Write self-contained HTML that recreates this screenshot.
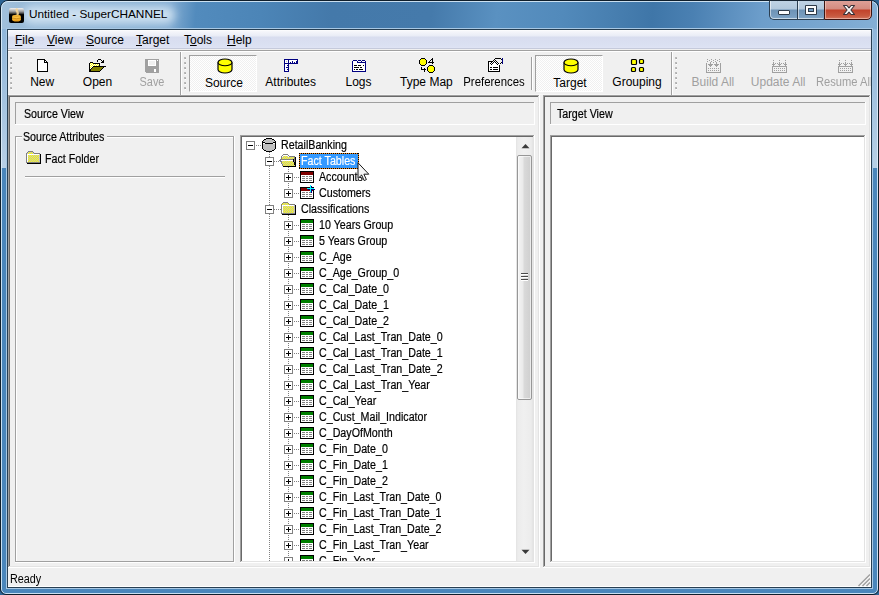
<!DOCTYPE html>
<html><head><meta charset="utf-8">
<style>
html,body{margin:0;padding:0;}
body{width:879px;height:595px;position:relative;overflow:hidden;background:#2d6494;font-family:"Liberation Sans",sans-serif;color:#000;}
.a{position:absolute;}
.t11{position:absolute;font-size:12px;line-height:14px;white-space:nowrap;transform:scaleX(0.89);transform-origin:0 0;-webkit-text-stroke:0.2px currentColor;}
.t12{position:absolute;font-size:12px;line-height:14px;white-space:nowrap;}
.dis{color:#a0a0a0;}
u{text-decoration:underline;text-underline-offset:1px;text-decoration-thickness:1px;}
</style></head>
<body>
<!-- ============ WINDOW FRAME ============ -->
<div class="a" style="left:0;top:0;width:877px;height:593px;border:1px solid #0f1e2b;border-radius:8px 8px 6px 6px;background:#4a86bb;overflow:hidden">
  <!-- title bar -->
  <div class="a" style="left:0;top:0;width:877px;height:28px;background:linear-gradient(95deg,#a2c1dc 0,#98bad8 25px,#82acd2 170px,#528bbd 195px,#4c85b7 260px,#4479aa 330px,#457aab 430px,#5a91c1 495px,#528abb 560px,#477eaf 615px,#3f76a8 650px,#4a80b2 690px,#6d9ecb 760px,#84afd5 877px)"></div>
  <div class="a" style="left:22px;top:5px;width:152px;height:18px;border-radius:9px;background:rgba(215,232,245,0.85);filter:blur(4.5px)"></div>
  <!-- side light sections -->
  <div class="a" style="left:0;top:28px;width:6px;height:139px;background:linear-gradient(180deg,#8fb6da,#b8d0e6)"></div>
  <div class="a" style="left:871px;top:28px;width:6px;height:139px;background:linear-gradient(180deg,#8fb6da,#b8d0e6)"></div>
  <!-- inner highlight -->
  <div class="a" style="left:0;top:0;width:875px;height:591px;border:1px solid rgba(225,240,250,0.85);border-radius:7px 7px 5px 5px"></div>
</div>
<!-- client outer light line + dark frame -->
<div class="a" style="left:6px;top:28px;width:865px;height:559px;border:1px solid #a8c8e4"></div>
<div class="a" style="left:7px;top:29px;width:863px;height:557px;border:1px solid #283f52;background:#f0f0f0"></div>

<!-- title icon -->
<div class="a" style="left:9px;top:8px;width:15px;height:15px;border-radius:2px;background:linear-gradient(180deg,#f2f2f2 0,#c4c4c4 2px,#949494 3.7px,#444 5.4px,#000 6.6px,#000 15px)"></div>
<svg class="a" style="left:9px;top:8px" width="15" height="15" viewBox="0 0 15 15">
  <path d="M7.8 1.5 C6.8 3 9.6 4 8.6 6.2" stroke="#f2d49a" stroke-width="2.3" fill="none" stroke-linecap="round" opacity="0.9"/>
  <ellipse cx="7.5" cy="11.6" rx="4.3" ry="2" fill="#e8a020"/>
  <rect x="3.2" y="8.8" width="8.6" height="3" fill="#f0b030"/>
  <ellipse cx="7.5" cy="8.8" rx="4.3" ry="2" fill="#f8c040"/>
  <path d="M3.5 10 Q7.5 11.5 11.5 10" stroke="#c07810" stroke-width="0.7" fill="none"/>
  <path d="M3.5 7.6 Q7.5 9 11.5 7.6" stroke="#d08818" stroke-width="0.6" fill="none"/>
</svg>
<div class="t12" style="left:29px;top:7px;font-size:11.8px;color:#000">Untitled - SuperCHANNEL</div>

<!-- caption buttons -->
<div class="a" style="left:769px;top:-4px;width:54px;height:22px;border:1px solid #2b3e50;border-right:none;border-radius:0 0 0 5px;overflow:hidden;background:linear-gradient(180deg,#c6d8e8 0,#b2c8dc 12px,#6e93b6 13px,#7a9fc1 20px,#8fb1d0 23px)">
  <div class="a" style="left:0;top:0;width:52px;height:20px;border:1px solid rgba(255,255,255,0.55);border-right:none;border-radius:0 0 0 4px"></div>
  <div class="a" style="left:27px;top:0;width:1px;height:22px;background:#2b3e50"></div>
  <div class="a" style="left:28px;top:0;width:1px;height:22px;background:rgba(255,255,255,0.55)"></div>
</div>
<div class="a" style="left:824px;top:-4px;width:46px;height:22px;border:1px solid #3c1410;border-radius:0 0 5px 0;overflow:hidden;background:linear-gradient(180deg,#e2aaa2 0,#d38b80 12px,#c1422b 13px,#c85a40 19px,#d4806a 23px)">
  <div class="a" style="left:0;top:0;width:44px;height:20px;border:1px solid rgba(255,225,215,0.5);border-radius:0 0 4px 0"></div>
</div>
<!-- min glyph -->
<div class="a" style="left:778px;top:10px;width:10px;height:3px;border:1px solid #2e3a48;border-radius:1px;background:#fcfcfc"></div>
<!-- max glyph -->
<div class="a" style="left:805px;top:5px;width:12px;height:10px;background:#2e3a48;border-radius:1px"></div>
<div class="a" style="left:806px;top:6px;width:10px;height:8px;background:#fcfcfc"></div>
<div class="a" style="left:808px;top:8px;width:6px;height:4px;background:#2e3a48"></div>
<div class="a" style="left:809px;top:9px;width:4px;height:2px;background:#6f9bc2"></div>
<!-- close glyph -->
<svg class="a" style="left:842px;top:4px" width="14" height="12" viewBox="0 0 14 12">
  <path d="M1.5 1.5 H4.9 L7 3.9 L9.1 1.5 H12.5 L8.9 6 L12.5 10.5 H9.1 L7 8.1 L4.9 10.5 H1.5 L5.1 6 Z" fill="#f8f8f8" stroke="#3a3238" stroke-width="1.1" stroke-linejoin="round"/>
</svg>

<!-- ============ MENU BAR ============ -->
<div class="a" style="left:8px;top:30px;width:863px;height:19px;background:linear-gradient(180deg,#ffffff 0px,#f6f7fb 1px,#e9ecf6 6px,#d8ddef 7px,#dbe1f2 16px,#dfe4f4 18px,#c5cadb 18px,#c5cadb 19px)"></div>
<div class="a" style="left:8px;top:49px;width:863px;height:1px;background:#f0f0f0"></div>
<div class="a" style="left:8px;top:50px;width:863px;height:1px;background:#a0a0a0"></div>
<div class="a" style="left:8px;top:51px;width:863px;height:1px;background:#ffffff"></div>
<div class="t12" style="left:15px;top:33px"><u>F</u>ile</div>
<div class="t12" style="left:47px;top:33px"><u>V</u>iew</div>
<div class="t12" style="left:86px;top:33px"><u>S</u>ource</div>
<div class="t12" style="left:136px;top:33px"><u>T</u>arget</div>
<div class="t12" style="left:184px;top:33px">T<u>o</u>ols</div>
<div class="t12" style="left:227px;top:33px"><u>H</u>elp</div>


<!-- caption top dark line -->
<div class="a" style="left:769px;top:0;width:103px;height:1px;background:#1a2836"></div>
<!-- ============ TOOLBAR ============ -->
<div class="a" style="left:8px;top:94px;width:863px;height:1px;background:#f6f6f6"></div>
<div class="a" style="left:10px;top:57px;width:2px;height:2px;background:#a8a8a8;border-radius:1px 1px 0 1px"></div><div class="a" style="left:11px;top:59px;width:1px;height:1px;background:#fff"></div><div class="a" style="left:10px;top:62px;width:2px;height:2px;background:#a8a8a8;border-radius:1px 1px 0 1px"></div><div class="a" style="left:11px;top:64px;width:1px;height:1px;background:#fff"></div><div class="a" style="left:10px;top:67px;width:2px;height:2px;background:#a8a8a8;border-radius:1px 1px 0 1px"></div><div class="a" style="left:11px;top:69px;width:1px;height:1px;background:#fff"></div><div class="a" style="left:10px;top:72px;width:2px;height:2px;background:#a8a8a8;border-radius:1px 1px 0 1px"></div><div class="a" style="left:11px;top:74px;width:1px;height:1px;background:#fff"></div><div class="a" style="left:10px;top:77px;width:2px;height:2px;background:#a8a8a8;border-radius:1px 1px 0 1px"></div><div class="a" style="left:11px;top:79px;width:1px;height:1px;background:#fff"></div><div class="a" style="left:10px;top:82px;width:2px;height:2px;background:#a8a8a8;border-radius:1px 1px 0 1px"></div><div class="a" style="left:11px;top:84px;width:1px;height:1px;background:#fff"></div><div class="a" style="left:10px;top:87px;width:2px;height:2px;background:#a8a8a8;border-radius:1px 1px 0 1px"></div><div class="a" style="left:11px;top:89px;width:1px;height:1px;background:#fff"></div>
<div class="a" style="left:184px;top:57px;width:2px;height:2px;background:#a8a8a8;border-radius:1px 1px 0 1px"></div><div class="a" style="left:185px;top:59px;width:1px;height:1px;background:#fff"></div><div class="a" style="left:184px;top:62px;width:2px;height:2px;background:#a8a8a8;border-radius:1px 1px 0 1px"></div><div class="a" style="left:185px;top:64px;width:1px;height:1px;background:#fff"></div><div class="a" style="left:184px;top:67px;width:2px;height:2px;background:#a8a8a8;border-radius:1px 1px 0 1px"></div><div class="a" style="left:185px;top:69px;width:1px;height:1px;background:#fff"></div><div class="a" style="left:184px;top:72px;width:2px;height:2px;background:#a8a8a8;border-radius:1px 1px 0 1px"></div><div class="a" style="left:185px;top:74px;width:1px;height:1px;background:#fff"></div><div class="a" style="left:184px;top:77px;width:2px;height:2px;background:#a8a8a8;border-radius:1px 1px 0 1px"></div><div class="a" style="left:185px;top:79px;width:1px;height:1px;background:#fff"></div><div class="a" style="left:184px;top:82px;width:2px;height:2px;background:#a8a8a8;border-radius:1px 1px 0 1px"></div><div class="a" style="left:185px;top:84px;width:1px;height:1px;background:#fff"></div><div class="a" style="left:184px;top:87px;width:2px;height:2px;background:#a8a8a8;border-radius:1px 1px 0 1px"></div><div class="a" style="left:185px;top:89px;width:1px;height:1px;background:#fff"></div>
<div class="a" style="left:675px;top:57px;width:2px;height:2px;background:#a8a8a8;border-radius:1px 1px 0 1px"></div><div class="a" style="left:676px;top:59px;width:1px;height:1px;background:#fff"></div><div class="a" style="left:675px;top:62px;width:2px;height:2px;background:#a8a8a8;border-radius:1px 1px 0 1px"></div><div class="a" style="left:676px;top:64px;width:1px;height:1px;background:#fff"></div><div class="a" style="left:675px;top:67px;width:2px;height:2px;background:#a8a8a8;border-radius:1px 1px 0 1px"></div><div class="a" style="left:676px;top:69px;width:1px;height:1px;background:#fff"></div><div class="a" style="left:675px;top:72px;width:2px;height:2px;background:#a8a8a8;border-radius:1px 1px 0 1px"></div><div class="a" style="left:676px;top:74px;width:1px;height:1px;background:#fff"></div><div class="a" style="left:675px;top:77px;width:2px;height:2px;background:#a8a8a8;border-radius:1px 1px 0 1px"></div><div class="a" style="left:676px;top:79px;width:1px;height:1px;background:#fff"></div><div class="a" style="left:675px;top:82px;width:2px;height:2px;background:#a8a8a8;border-radius:1px 1px 0 1px"></div><div class="a" style="left:676px;top:84px;width:1px;height:1px;background:#fff"></div><div class="a" style="left:675px;top:87px;width:2px;height:2px;background:#a8a8a8;border-radius:1px 1px 0 1px"></div><div class="a" style="left:676px;top:89px;width:1px;height:1px;background:#fff"></div>
<div class="a" style="left:180px;top:52px;width:1px;height:43px;background:#a0a0a0"></div><div class="a" style="left:181px;top:52px;width:1px;height:43px;background:#fff"></div>
<div class="a" style="left:671px;top:52px;width:1px;height:43px;background:#a0a0a0"></div><div class="a" style="left:672px;top:52px;width:1px;height:43px;background:#fff"></div>
<div class="a" style="left:531px;top:57px;width:1px;height:33px;background:#a0a0a0"></div><div class="a" style="left:532px;top:57px;width:1px;height:33px;background:#fff"></div>
<div class="a" style="left:189px;top:55px;width:66px;height:35px;border-style:solid;border-width:1px;border-color:#a0a0a0 #fff #fff #a0a0a0;background-color:#f8f8f8;background-image:conic-gradient(#fff 25%,#f0f0f0 0 50%,#fff 0 75%,#f0f0f0 0);background-size:2px 2px"></div>
<div class="a" style="left:535px;top:55px;width:66px;height:35px;border-style:solid;border-width:1px;border-color:#a0a0a0 #fff #fff #a0a0a0;background-color:#f8f8f8;background-image:conic-gradient(#fff 25%,#f0f0f0 0 50%,#fff 0 75%,#f0f0f0 0);background-size:2px 2px"></div>
<div class="t12" style="left:-7.8px;top:75px;width:100px;text-align:center">New</div>
<div class="t12" style="left:47.5px;top:75px;width:100px;text-align:center">Open</div>
<div class="t12 dis" style="left:101.9px;top:75px;width:100px;text-align:center;transform:scaleX(0.91)">Save</div>
<div class="t12" style="left:173.9px;top:76px;width:100px;text-align:center">Source</div>
<div class="t12" style="left:240.7px;top:75px;width:100px;text-align:center">Attributes</div>
<div class="t12" style="left:308.5px;top:75px;width:100px;text-align:center">Logs</div>
<div class="t12" style="left:376.4px;top:75px;width:100px;text-align:center">Type Map</div>
<div class="t12" style="left:443.8px;top:75px;width:100px;text-align:center;transform:scaleX(0.95)">Preferences</div>
<div class="t12" style="left:520.0px;top:76px;width:100px;text-align:center">Target</div>
<div class="t12" style="left:587.0px;top:75px;width:100px;text-align:center">Grouping</div>
<div class="t12 dis" style="left:662.9px;top:75px;width:100px;text-align:center">Build All</div>
<div class="t12 dis" style="left:728.2px;top:75px;width:100px;text-align:center">Update All</div>
<div class="a" style="left:790px;top:72px;width:81px;height:20px;overflow:hidden"><div class="t12 dis" style="left:25.5px;top:3px;transform:scaleX(0.93);transform-origin:0 0">Resume All</div></div>

<!-- New -->
<svg class="a" style="left:37px;top:59px" width="12" height="14" viewBox="0 0 12 14" shape-rendering="crispEdges">
<path d="M0.5 0.5H7.5L10.5 3.5V12.5H0.5Z" fill="#fff" stroke="#000"/>
<path d="M7.5 0.5V3.5H10.5" fill="none" stroke="#000"/>
</svg>
<!-- Open -->
<svg class="a" style="left:87px;top:58px" width="19" height="14" viewBox="0 0 19 14" shape-rendering="crispEdges"><path d="M11 1h1v1h-1zM12 1h1v1h-1zM13 1h1v1h-1zM10 2h1v1h-1zM14 2h1v1h-1zM16 2h1v1h-1zM10 3h1v1h-1zM15 3h1v1h-1zM16 3h1v1h-1zM3 4h1v1h-1zM4 4h1v1h-1zM5 4h1v1h-1zM14 4h1v1h-1zM15 4h1v1h-1zM16 4h1v1h-1zM2 5h1v1h-1zM6 5h1v1h-1zM7 5h1v1h-1zM8 5h1v1h-1zM9 5h1v1h-1zM10 5h1v1h-1zM11 5h1v1h-1zM12 5h1v1h-1zM2 6h1v1h-1zM12 6h1v1h-1zM2 7h1v1h-1zM12 7h1v1h-1zM2 8h1v1h-1zM6 8h1v1h-1zM7 8h1v1h-1zM8 8h1v1h-1zM9 8h1v1h-1zM10 8h1v1h-1zM11 8h1v1h-1zM12 8h1v1h-1zM13 8h1v1h-1zM14 8h1v1h-1zM15 8h1v1h-1zM16 8h1v1h-1zM17 8h1v1h-1zM18 8h1v1h-1zM2 9h1v1h-1zM5 9h1v1h-1zM16 9h1v1h-1zM2 10h1v1h-1zM4 10h1v1h-1zM15 10h1v1h-1zM2 11h1v1h-1zM3 11h1v1h-1zM14 11h1v1h-1zM2 12h1v1h-1zM3 12h1v1h-1zM13 12h1v1h-1zM2 13h1v1h-1zM3 13h1v1h-1zM4 13h1v1h-1zM5 13h1v1h-1zM6 13h1v1h-1zM7 13h1v1h-1zM8 13h1v1h-1zM9 13h1v1h-1zM10 13h1v1h-1zM11 13h1v1h-1zM12 13h1v1h-1z" fill="#000"/><path d="M3 5h1v1h-1zM5 5h1v1h-1zM4 6h1v1h-1zM6 6h1v1h-1zM8 6h1v1h-1zM10 6h1v1h-1zM3 7h1v1h-1zM5 7h1v1h-1zM7 7h1v1h-1zM9 7h1v1h-1zM11 7h1v1h-1zM4 8h1v1h-1zM3 9h1v1h-1z" fill="#ffff00"/><path d="M4 5h1v1h-1zM3 6h1v1h-1zM5 6h1v1h-1zM7 6h1v1h-1zM9 6h1v1h-1zM11 6h1v1h-1zM4 7h1v1h-1zM6 7h1v1h-1zM8 7h1v1h-1zM10 7h1v1h-1zM3 8h1v1h-1zM5 8h1v1h-1zM4 9h1v1h-1zM3 10h1v1h-1z" fill="#ffffff"/><path d="M6 9h1v1h-1zM7 9h1v1h-1zM8 9h1v1h-1zM9 9h1v1h-1zM10 9h1v1h-1zM11 9h1v1h-1zM12 9h1v1h-1zM13 9h1v1h-1zM14 9h1v1h-1zM15 9h1v1h-1zM5 10h1v1h-1zM6 10h1v1h-1zM7 10h1v1h-1zM8 10h1v1h-1zM9 10h1v1h-1zM10 10h1v1h-1zM11 10h1v1h-1zM12 10h1v1h-1zM13 10h1v1h-1zM14 10h1v1h-1zM4 11h1v1h-1zM5 11h1v1h-1zM6 11h1v1h-1zM7 11h1v1h-1zM8 11h1v1h-1zM9 11h1v1h-1zM10 11h1v1h-1zM11 11h1v1h-1zM12 11h1v1h-1zM13 11h1v1h-1zM4 12h1v1h-1zM5 12h1v1h-1zM6 12h1v1h-1zM7 12h1v1h-1zM8 12h1v1h-1zM9 12h1v1h-1zM10 12h1v1h-1zM11 12h1v1h-1zM12 12h1v1h-1z" fill="#808000"/></svg>
<!-- Save (disabled) -->
<svg class="a" style="left:145px;top:59px" width="14" height="14" viewBox="0 0 14 14" shape-rendering="crispEdges">
<rect x="0" y="0" width="14" height="14" fill="#a0a0a0"/>
<rect x="3" y="1" width="8" height="6" fill="#fff"/>
<rect x="4" y="2" width="6" height="4" fill="#f0f0f0"/>
<rect x="12" y="1" width="1" height="1" fill="#fff"/>
<rect x="9" y="10" width="2" height="3" fill="#fff"/>
<rect x="0" y="13" width="1" height="1" fill="#f0f0f0"/>
</svg>
<!-- Source cylinder -->
<svg class="a" style="left:217px;top:58px" width="16" height="16" viewBox="0 0 16 16">
<path d="M1 4.5 V11.5 A7 3.5 0 0 0 15 11.5 V4.5 A7 3.5 0 0 0 1 4.5Z" fill="#ffff00" stroke="#000" stroke-width="1.2"/>
<path d="M1 4.5 A7 3.2 0 0 0 15 4.5" fill="none" stroke="#000" stroke-width="1.1"/>
</svg>
<!-- Target cylinder -->
<svg class="a" style="left:563px;top:58px" width="16" height="16" viewBox="0 0 16 16">
<path d="M1 4.5 V11.5 A7 3.5 0 0 0 15 11.5 V4.5 A7 3.5 0 0 0 1 4.5Z" fill="#ffff00" stroke="#000" stroke-width="1.2"/>
<path d="M1 4.5 A7 3.2 0 0 0 15 4.5" fill="none" stroke="#000" stroke-width="1.1"/>
</svg>
<!-- Attributes -->
<svg class="a" style="left:284px;top:59px" width="14" height="13" viewBox="0 0 14 13" shape-rendering="crispEdges">
<path d="M0 0h14v5h-9v8h-5z" fill="#000080"/>
<rect x="1" y="1" width="3" height="3" fill="#fff"/>
<rect x="5" y="1" width="8" height="3" fill="#fff"/>
<rect x="1" y="5" width="3" height="7" fill="#fff"/>
<path d="M6 3h1v1h-1zM8 2h1v2h-1zM10 3h1v1h-1zM12 2h1v2h-1zM3 6h1v1h-1zM2 8h2v1h-2zM3 10h1v1h-1z" fill="#000080"/>
<rect x="2" y="2" width="1" height="1" fill="#c0c0c0"/>
</svg>
<!-- Logs -->
<svg class="a" style="left:352px;top:60px" width="14" height="12" viewBox="0 0 14 12" shape-rendering="crispEdges">
<path d="M1 0h4v1h-4zM6 0h3v1h-3zM10 0h3v1h-3zM0 1h1v11h-1zM13 1h1v11h-1zM0 11h14v1h-14zM5 1h1v2h-1zM9 1h1v2h-1zM5 2h9v1h-9z" fill="#000080"/>
<rect x="1" y="1" width="4" height="10" fill="#fff"/><rect x="1" y="3" width="12" height="8" fill="#fff"/>
<rect x="6" y="1" width="3" height="1" fill="#fff"/><rect x="10" y="1" width="3" height="1" fill="#fff"/>
<path d="M2 5h3v1h-3zM6 5h3v1h-3zM11 5h1v1h-1zM2 7h5v1h-5zM8 7h2v1h-2zM2 9h1v1h-1zM4 9h2v1h-2zM7 9h4v1h-4z" fill="#000"/>
</svg>
<!-- Type Map -->
<svg class="a" style="left:419px;top:58px" width="16" height="15" viewBox="0 0 16 15" shape-rendering="crispEdges"><path d="M2 0h1v1h-1zM3 0h1v1h-1zM4 0h1v1h-1zM5 0h1v1h-1zM13 0h1v1h-1zM1 1h1v1h-1zM6 1h1v1h-1zM12 1h1v1h-1zM13 1h1v1h-1zM0 2h1v1h-1zM7 2h1v1h-1zM11 2h1v1h-1zM13 2h1v1h-1zM0 3h1v1h-1zM7 3h1v1h-1zM10 3h1v1h-1zM13 3h1v1h-1zM0 4h1v1h-1zM7 4h1v1h-1zM9 4h1v1h-1zM10 4h1v1h-1zM11 4h1v1h-1zM12 4h1v1h-1zM13 4h1v1h-1zM14 4h1v1h-1zM0 5h1v1h-1zM7 5h1v1h-1zM13 5h1v1h-1zM1 6h1v1h-1zM6 6h1v1h-1zM2 7h1v1h-1zM3 7h1v1h-1zM4 7h1v1h-1zM5 7h1v1h-1zM10 7h1v1h-1zM11 7h1v1h-1zM12 7h1v1h-1zM13 7h1v1h-1zM9 8h1v1h-1zM14 8h1v1h-1zM2 9h1v1h-1zM8 9h1v1h-1zM15 9h1v1h-1zM2 10h1v1h-1zM5 10h1v1h-1zM8 10h1v1h-1zM15 10h1v1h-1zM2 11h1v1h-1zM3 11h1v1h-1zM4 11h1v1h-1zM5 11h1v1h-1zM6 11h1v1h-1zM8 11h1v1h-1zM15 11h1v1h-1zM5 12h1v1h-1zM8 12h1v1h-1zM15 12h1v1h-1zM5 13h1v1h-1zM9 13h1v1h-1zM14 13h1v1h-1zM10 14h1v1h-1zM11 14h1v1h-1zM12 14h1v1h-1zM13 14h1v1h-1z" fill="#000"/><path d="M2 1h1v1h-1zM3 1h1v1h-1zM4 1h1v1h-1zM5 1h1v1h-1zM1 2h1v1h-1zM2 2h1v1h-1zM3 2h1v1h-1zM4 2h1v1h-1zM5 2h1v1h-1zM6 2h1v1h-1zM1 3h1v1h-1zM2 3h1v1h-1zM3 3h1v1h-1zM4 3h1v1h-1zM5 3h1v1h-1zM6 3h1v1h-1zM1 4h1v1h-1zM2 4h1v1h-1zM3 4h1v1h-1zM4 4h1v1h-1zM5 4h1v1h-1zM6 4h1v1h-1zM1 5h1v1h-1zM2 5h1v1h-1zM3 5h1v1h-1zM4 5h1v1h-1zM5 5h1v1h-1zM6 5h1v1h-1zM2 6h1v1h-1zM3 6h1v1h-1zM4 6h1v1h-1zM5 6h1v1h-1zM10 8h1v1h-1zM11 8h1v1h-1zM12 8h1v1h-1zM13 8h1v1h-1zM9 9h1v1h-1zM10 9h1v1h-1zM11 9h1v1h-1zM12 9h1v1h-1zM13 9h1v1h-1zM14 9h1v1h-1zM9 10h1v1h-1zM10 10h1v1h-1zM11 10h1v1h-1zM12 10h1v1h-1zM13 10h1v1h-1zM14 10h1v1h-1zM9 11h1v1h-1zM10 11h1v1h-1zM11 11h1v1h-1zM12 11h1v1h-1zM13 11h1v1h-1zM14 11h1v1h-1zM9 12h1v1h-1zM10 12h1v1h-1zM11 12h1v1h-1zM12 12h1v1h-1zM13 12h1v1h-1zM14 12h1v1h-1zM10 13h1v1h-1zM11 13h1v1h-1zM12 13h1v1h-1zM13 13h1v1h-1z" fill="#ffff00"/></svg>
<!-- Preferences -->
<svg class="a" style="left:488px;top:58px" width="16" height="15" viewBox="0 0 16 15" shape-rendering="crispEdges">
<path d="M0 3h4v1h-3v9h10v-6h1v7h-12z" fill="#000"/>
<rect x="1" y="4" width="10" height="9" fill="#fff"/>
<path d="M7 0h6v1h-6zM13 1h1v1h-1zM13 4h1v1h-1zM12 5h1v1h-1z" fill="#000"/>
<rect x="14" y="0" width="1" height="6" fill="#000080"/>
<path d="M6 1h1v1h-1zM5 2h1v1h-1zM7 2h1v1h-1zM4 3h1v1h-1zM6 3h1v1h-1zM8 3h1v1h-1zM3 4h1v1h-1zM5 4h1v1h-1zM7 4h1v1h-1zM9 4h1v1h-1zM2 5h1v1h-1zM4 5h1v1h-1zM8 5h1v1h-1zM10 5h1v1h-1zM3 6h1v1h-1zM9 6h1v1h-1z" fill="#000"/>
<path d="M2 9h2v1h-2zM5 9h5v1h-5zM2 11h2v1h-2zM5 11h5v1h-5z" fill="#000"/>
</svg>
<!-- Grouping -->
<svg class="a" style="left:630px;top:58px" width="15" height="15" viewBox="0 0 15 15">
<rect x="1.5" y="1.5" width="5" height="5" rx="1" fill="#ffff00" stroke="#000" stroke-width="1.2"/>
<rect x="9.5" y="1.5" width="4" height="4" rx="1" fill="#ffff00" stroke="#000" stroke-width="1.2"/>
<rect x="1.5" y="9.5" width="4" height="4" rx="1" fill="#ffff00" stroke="#000" stroke-width="1.2"/>
<rect x="9.5" y="9.5" width="4" height="4" rx="1" fill="#ffff00" stroke="#000" stroke-width="1.2"/>
</svg>
<!-- Build All (disabled) -->
<svg class="a" style="left:706px;top:59px" width="15" height="14" viewBox="0 0 15 14" shape-rendering="crispEdges"><path d="M1 0h1v1h-1zM5 0h1v1h-1zM9 0h1v1h-1zM13 0h1v1h-1zM3 1h1v1h-1zM7 1h1v1h-1zM11 1h1v1h-1zM1 2h1v1h-1zM5 2h1v1h-1zM9 2h1v1h-1zM13 2h1v1h-1zM4 3h1v1h-1zM7 3h1v1h-1zM10 3h1v1h-1zM0 4h1v1h-1zM4 4h1v1h-1zM10 4h1v1h-1zM14 4h1v1h-1zM0 5h1v1h-1zM2 5h1v1h-1zM3 5h1v1h-1zM4 5h1v1h-1zM5 5h1v1h-1zM6 5h1v1h-1zM8 5h1v1h-1zM9 5h1v1h-1zM10 5h1v1h-1zM11 5h1v1h-1zM12 5h1v1h-1zM14 5h1v1h-1zM0 6h1v1h-1zM3 6h1v1h-1zM4 6h1v1h-1zM5 6h1v1h-1zM9 6h1v1h-1zM10 6h1v1h-1zM11 6h1v1h-1zM14 6h1v1h-1zM0 7h1v1h-1zM4 7h1v1h-1zM10 7h1v1h-1zM14 7h1v1h-1zM0 8h1v1h-1zM14 8h1v1h-1zM0 9h1v1h-1zM2 9h1v1h-1zM4 9h1v1h-1zM6 9h1v1h-1zM8 9h1v1h-1zM10 9h1v1h-1zM12 9h1v1h-1zM14 9h1v1h-1zM0 10h1v1h-1zM14 10h1v1h-1zM0 11h1v1h-1zM2 11h1v1h-1zM4 11h1v1h-1zM6 11h1v1h-1zM8 11h1v1h-1zM10 11h1v1h-1zM12 11h1v1h-1zM14 11h1v1h-1zM0 12h1v1h-1zM14 12h1v1h-1zM0 13h1v1h-1zM1 13h1v1h-1zM2 13h1v1h-1zM3 13h1v1h-1zM4 13h1v1h-1zM5 13h1v1h-1zM6 13h1v1h-1zM7 13h1v1h-1zM8 13h1v1h-1zM9 13h1v1h-1zM10 13h1v1h-1zM11 13h1v1h-1zM12 13h1v1h-1zM13 13h1v1h-1zM14 13h1v1h-1z" fill="#a0a0a0"/></svg>
<svg class="a" style="left:772px;top:60px" width="15" height="13" viewBox="0 0 15 13" shape-rendering="crispEdges"><path d="M1 0h1v1h-1zM7 0h1v1h-1zM13 0h1v1h-1zM1 2h1v1h-1zM7 2h1v1h-1zM13 2h1v1h-1zM1 3h1v1h-1zM3 3h1v1h-1zM5 3h1v1h-1zM7 3h1v1h-1zM9 3h1v1h-1zM11 3h1v1h-1zM13 3h1v1h-1zM0 4h1v1h-1zM1 4h1v1h-1zM2 4h1v1h-1zM6 4h1v1h-1zM7 4h1v1h-1zM8 4h1v1h-1zM12 4h1v1h-1zM13 4h1v1h-1zM14 4h1v1h-1zM1 5h1v1h-1zM7 5h1v1h-1zM13 5h1v1h-1zM0 6h1v1h-1zM1 6h1v1h-1zM2 6h1v1h-1zM3 6h1v1h-1zM4 6h1v1h-1zM5 6h1v1h-1zM6 6h1v1h-1zM7 6h1v1h-1zM8 6h1v1h-1zM9 6h1v1h-1zM10 6h1v1h-1zM11 6h1v1h-1zM12 6h1v1h-1zM13 6h1v1h-1zM14 6h1v1h-1zM0 7h1v1h-1zM14 7h1v1h-1zM0 8h1v1h-1zM2 8h1v1h-1zM4 8h1v1h-1zM6 8h1v1h-1zM8 8h1v1h-1zM10 8h1v1h-1zM12 8h1v1h-1zM14 8h1v1h-1zM0 9h1v1h-1zM14 9h1v1h-1zM0 10h1v1h-1zM2 10h1v1h-1zM4 10h1v1h-1zM6 10h1v1h-1zM8 10h1v1h-1zM10 10h1v1h-1zM12 10h1v1h-1zM14 10h1v1h-1zM0 11h1v1h-1zM14 11h1v1h-1zM0 12h1v1h-1zM1 12h1v1h-1zM2 12h1v1h-1zM3 12h1v1h-1zM4 12h1v1h-1zM5 12h1v1h-1zM6 12h1v1h-1zM7 12h1v1h-1zM8 12h1v1h-1zM9 12h1v1h-1zM10 12h1v1h-1zM11 12h1v1h-1zM12 12h1v1h-1zM13 12h1v1h-1zM14 12h1v1h-1z" fill="#a0a0a0"/></svg>
<svg class="a" style="left:838px;top:60px" width="15" height="13" viewBox="0 0 15 13" shape-rendering="crispEdges"><path d="M1 0h1v1h-1zM7 0h1v1h-1zM13 0h1v1h-1zM1 2h1v1h-1zM7 2h1v1h-1zM13 2h1v1h-1zM1 3h1v1h-1zM3 3h1v1h-1zM5 3h1v1h-1zM7 3h1v1h-1zM9 3h1v1h-1zM11 3h1v1h-1zM13 3h1v1h-1zM0 4h1v1h-1zM1 4h1v1h-1zM2 4h1v1h-1zM6 4h1v1h-1zM7 4h1v1h-1zM8 4h1v1h-1zM12 4h1v1h-1zM13 4h1v1h-1zM14 4h1v1h-1zM1 5h1v1h-1zM7 5h1v1h-1zM13 5h1v1h-1zM0 6h1v1h-1zM1 6h1v1h-1zM2 6h1v1h-1zM3 6h1v1h-1zM4 6h1v1h-1zM5 6h1v1h-1zM6 6h1v1h-1zM7 6h1v1h-1zM8 6h1v1h-1zM9 6h1v1h-1zM10 6h1v1h-1zM11 6h1v1h-1zM12 6h1v1h-1zM13 6h1v1h-1zM14 6h1v1h-1zM0 7h1v1h-1zM14 7h1v1h-1zM0 8h1v1h-1zM2 8h1v1h-1zM4 8h1v1h-1zM6 8h1v1h-1zM8 8h1v1h-1zM10 8h1v1h-1zM12 8h1v1h-1zM14 8h1v1h-1zM0 9h1v1h-1zM14 9h1v1h-1zM0 10h1v1h-1zM2 10h1v1h-1zM4 10h1v1h-1zM6 10h1v1h-1zM8 10h1v1h-1zM10 10h1v1h-1zM12 10h1v1h-1zM14 10h1v1h-1zM0 11h1v1h-1zM14 11h1v1h-1zM0 12h1v1h-1zM1 12h1v1h-1zM2 12h1v1h-1zM3 12h1v1h-1zM4 12h1v1h-1zM5 12h1v1h-1zM6 12h1v1h-1zM7 12h1v1h-1zM8 12h1v1h-1zM9 12h1v1h-1zM10 12h1v1h-1zM11 12h1v1h-1zM12 12h1v1h-1zM13 12h1v1h-1zM14 12h1v1h-1z" fill="#a0a0a0"/></svg>




<!-- ============ PANES ============ -->
<div class="a" style="left:8px;top:95px;width:532px;height:473px;background:#fff"></div><div class="a" style="left:8px;top:95px;width:531px;height:472px;background:#a0a0a0"></div><div class="a" style="left:9px;top:96px;width:530px;height:471px;background:#e3e3e3"></div><div class="a" style="left:9px;top:96px;width:529px;height:470px;background:#696969"></div><div class="a" style="left:10px;top:97px;width:528px;height:469px;background:#f0f0f0"></div>
<div class="a" style="left:543px;top:95px;width:328px;height:473px;background:#fff"></div><div class="a" style="left:543px;top:95px;width:327px;height:472px;background:#a0a0a0"></div><div class="a" style="left:544px;top:96px;width:326px;height:471px;background:#e3e3e3"></div><div class="a" style="left:544px;top:96px;width:325px;height:470px;background:#696969"></div><div class="a" style="left:545px;top:97px;width:324px;height:469px;background:#f0f0f0"></div>
<div class="a" style="left:15px;top:102px;width:520px;height:23px;background:#fff"></div><div class="a" style="left:15px;top:102px;width:519px;height:22px;background:#a0a0a0"></div><div class="a" style="left:16px;top:103px;width:518px;height:21px;background:#f0f0f0"></div>
<div class="a" style="left:550px;top:102px;width:316px;height:23px;background:#fff"></div><div class="a" style="left:550px;top:102px;width:315px;height:22px;background:#a0a0a0"></div><div class="a" style="left:551px;top:103px;width:314px;height:21px;background:#f0f0f0"></div>
<div class="t11" style="left:24px;top:107px">Source View</div>
<div class="t11" style="left:557px;top:107px">Target View</div>
<div class="a" style="left:15px;top:136px;width:219px;height:1px;background:#a0a0a0"></div><div class="a" style="left:16px;top:137px;width:217px;height:1px;background:#fff"></div><div class="a" style="left:15px;top:136px;width:1px;height:426px;background:#a0a0a0"></div><div class="a" style="left:16px;top:137px;width:1px;height:424px;background:#fff"></div><div class="a" style="left:233px;top:136px;width:1px;height:426px;background:#a0a0a0"></div><div class="a" style="left:234px;top:136px;width:1px;height:427px;background:#fff"></div><div class="a" style="left:15px;top:561px;width:219px;height:1px;background:#a0a0a0"></div><div class="a" style="left:15px;top:562px;width:220px;height:1px;background:#fff"></div><div class="a" style="left:22px;top:135px;width:85px;height:4px;background:#f0f0f0"></div>
<div class="t11" style="left:23px;top:130px">Source Attributes</div>
<svg class="a" style="left:26px;top:151px" width="15" height="13" viewBox="0 0 15 13" shape-rendering="crispEdges"><path d="M2 0h1v1h-1zM3 0h1v1h-1zM4 0h1v1h-1zM5 0h1v1h-1zM6 0h1v1h-1zM1 1h1v1h-1zM7 1h1v1h-1zM0 2h1v1h-1zM8 2h1v1h-1zM9 2h1v1h-1zM10 2h1v1h-1zM11 2h1v1h-1zM12 2h1v1h-1zM13 2h1v1h-1zM0 3h1v1h-1zM0 4h1v1h-1zM0 5h1v1h-1zM0 6h1v1h-1zM0 7h1v1h-1zM0 8h1v1h-1zM0 9h1v1h-1zM0 10h1v1h-1zM0 11h1v1h-1zM1 11h1v1h-1zM2 11h1v1h-1zM3 11h1v1h-1zM4 11h1v1h-1zM5 11h1v1h-1zM6 11h1v1h-1zM7 11h1v1h-1zM8 11h1v1h-1zM9 11h1v1h-1zM10 11h1v1h-1zM11 11h1v1h-1zM12 11h1v1h-1zM13 11h1v1h-1z" fill="#808080"/><path d="M2 1h1v1h-1zM4 1h1v1h-1zM6 1h1v1h-1zM1 2h1v1h-1zM3 2h1v1h-1zM5 2h1v1h-1zM7 2h1v1h-1zM13 3h1v1h-1zM3 4h1v1h-1zM5 4h1v1h-1zM7 4h1v1h-1zM9 4h1v1h-1zM11 4h1v1h-1zM13 4h1v1h-1zM2 5h1v1h-1zM4 5h1v1h-1zM6 5h1v1h-1zM8 5h1v1h-1zM10 5h1v1h-1zM12 5h1v1h-1zM13 5h1v1h-1zM3 6h1v1h-1zM5 6h1v1h-1zM7 6h1v1h-1zM9 6h1v1h-1zM11 6h1v1h-1zM13 6h1v1h-1zM2 7h1v1h-1zM4 7h1v1h-1zM6 7h1v1h-1zM8 7h1v1h-1zM10 7h1v1h-1zM12 7h1v1h-1zM13 7h1v1h-1zM3 8h1v1h-1zM5 8h1v1h-1zM7 8h1v1h-1zM9 8h1v1h-1zM11 8h1v1h-1zM13 8h1v1h-1zM2 9h1v1h-1zM4 9h1v1h-1zM6 9h1v1h-1zM8 9h1v1h-1zM10 9h1v1h-1zM12 9h1v1h-1zM13 9h1v1h-1zM3 10h1v1h-1zM5 10h1v1h-1zM7 10h1v1h-1zM9 10h1v1h-1zM11 10h1v1h-1zM13 10h1v1h-1z" fill="#c0c0c0"/><path d="M3 1h1v1h-1zM5 1h1v1h-1zM2 2h1v1h-1zM4 2h1v1h-1zM6 2h1v1h-1zM2 4h1v1h-1zM4 4h1v1h-1zM6 4h1v1h-1zM8 4h1v1h-1zM10 4h1v1h-1zM12 4h1v1h-1zM3 5h1v1h-1zM5 5h1v1h-1zM7 5h1v1h-1zM9 5h1v1h-1zM11 5h1v1h-1zM2 6h1v1h-1zM4 6h1v1h-1zM6 6h1v1h-1zM8 6h1v1h-1zM10 6h1v1h-1zM12 6h1v1h-1zM3 7h1v1h-1zM5 7h1v1h-1zM7 7h1v1h-1zM9 7h1v1h-1zM11 7h1v1h-1zM2 8h1v1h-1zM4 8h1v1h-1zM6 8h1v1h-1zM8 8h1v1h-1zM10 8h1v1h-1zM12 8h1v1h-1zM3 9h1v1h-1zM5 9h1v1h-1zM7 9h1v1h-1zM9 9h1v1h-1zM11 9h1v1h-1zM2 10h1v1h-1zM4 10h1v1h-1zM6 10h1v1h-1zM8 10h1v1h-1zM10 10h1v1h-1zM12 10h1v1h-1z" fill="#ffff00"/><path d="M1 3h1v1h-1zM2 3h1v1h-1zM3 3h1v1h-1zM4 3h1v1h-1zM5 3h1v1h-1zM6 3h1v1h-1zM7 3h1v1h-1zM8 3h1v1h-1zM9 3h1v1h-1zM10 3h1v1h-1zM11 3h1v1h-1zM12 3h1v1h-1zM1 4h1v1h-1zM1 5h1v1h-1zM1 6h1v1h-1zM1 7h1v1h-1zM1 8h1v1h-1zM1 9h1v1h-1zM1 10h1v1h-1z" fill="#fff"/><path d="M14 3h1v1h-1zM14 4h1v1h-1zM14 5h1v1h-1zM14 6h1v1h-1zM14 7h1v1h-1zM14 8h1v1h-1zM14 9h1v1h-1zM14 10h1v1h-1zM14 11h1v1h-1zM1 12h1v1h-1zM2 12h1v1h-1zM3 12h1v1h-1zM4 12h1v1h-1zM5 12h1v1h-1zM6 12h1v1h-1zM7 12h1v1h-1zM8 12h1v1h-1zM9 12h1v1h-1zM10 12h1v1h-1zM11 12h1v1h-1zM12 12h1v1h-1zM13 12h1v1h-1zM14 12h1v1h-1z" fill="#000"/></svg>
<div class="t11" style="left:45px;top:152px">Fact Folder</div>
<div class="a" style="left:25px;top:176px;width:200px;height:1px;background:#a0a0a0"></div><div class="a" style="left:25px;top:177px;width:200px;height:1px;background:#fff"></div>
<div class="a" style="left:240px;top:135px;width:295px;height:428px;background:#fff"></div><div class="a" style="left:240px;top:135px;width:294px;height:427px;background:#a0a0a0"></div><div class="a" style="left:241px;top:136px;width:293px;height:426px;background:#e3e3e3"></div><div class="a" style="left:241px;top:136px;width:292px;height:425px;background:#696969"></div><div class="a" style="left:242px;top:137px;width:291px;height:424px;background:#fff"></div>
<div class="a" style="left:550px;top:135px;width:316px;height:428px;background:#fff"></div><div class="a" style="left:550px;top:135px;width:315px;height:427px;background:#a0a0a0"></div><div class="a" style="left:551px;top:136px;width:314px;height:426px;background:#e3e3e3"></div><div class="a" style="left:551px;top:136px;width:313px;height:425px;background:#696969"></div><div class="a" style="left:552px;top:137px;width:312px;height:424px;background:#fff"></div>
<div class="a" style="left:242px;top:137px;width:274px;height:424px;overflow:hidden">
<div class="a" style="left:27px;top:15px;width:1px;height:449px;background:repeating-linear-gradient(180deg,#808080 0 1px,transparent 1px 2px)"></div><div class="a" style="left:46px;top:30px;width:1px;height:27px;background:repeating-linear-gradient(180deg,#808080 0 1px,transparent 1px 2px)"></div><div class="a" style="left:46px;top:78px;width:1px;height:386px;background:repeating-linear-gradient(180deg,#808080 0 1px,transparent 1px 2px)"></div>
<div class="a" style="left:14px;top:8px;width:6px;height:1px;background:repeating-linear-gradient(90deg,#808080 0 1px,transparent 1px 2px)"></div><div class="a" style="left:4px;top:4px;width:7px;height:7px;border:1px solid #808080;background:#fff"></div><div class="a" style="left:6px;top:8px;width:5px;height:1px;background:#000"></div><svg class="a" style="left:20px;top:1px" width="14" height="14" viewBox="0 0 14 14" shape-rendering="crispEdges"><path d="M4 0h1v1h-1zM5 0h1v1h-1zM6 0h1v1h-1zM7 0h1v1h-1zM8 0h1v1h-1zM9 0h1v1h-1zM2 1h1v1h-1zM3 1h1v1h-1zM10 1h1v1h-1zM11 1h1v1h-1zM1 2h1v1h-1zM12 2h1v1h-1zM0 3h1v1h-1zM13 3h1v1h-1zM0 4h1v1h-1zM1 4h1v1h-1zM2 4h1v1h-1zM11 4h1v1h-1zM12 4h1v1h-1zM13 4h1v1h-1zM0 5h1v1h-1zM3 5h1v1h-1zM4 5h1v1h-1zM5 5h1v1h-1zM6 5h1v1h-1zM7 5h1v1h-1zM8 5h1v1h-1zM9 5h1v1h-1zM10 5h1v1h-1zM13 5h1v1h-1zM0 6h1v1h-1zM13 6h1v1h-1zM0 7h1v1h-1zM13 7h1v1h-1zM0 8h1v1h-1zM13 8h1v1h-1zM0 9h1v1h-1zM13 9h1v1h-1zM0 10h1v1h-1zM13 10h1v1h-1zM1 11h1v1h-1zM12 11h1v1h-1zM2 12h1v1h-1zM3 12h1v1h-1zM10 12h1v1h-1zM11 12h1v1h-1zM4 13h1v1h-1zM5 13h1v1h-1zM6 13h1v1h-1zM7 13h1v1h-1zM8 13h1v1h-1zM9 13h1v1h-1z" fill="#000"/><path d="M4 1h1v1h-1zM5 1h1v1h-1zM6 1h1v1h-1zM7 1h1v1h-1zM8 1h1v1h-1zM9 1h1v1h-1zM2 2h1v1h-1zM3 2h1v1h-1zM4 2h1v1h-1zM5 2h1v1h-1zM6 2h1v1h-1zM7 2h1v1h-1zM8 2h1v1h-1zM9 2h1v1h-1zM10 2h1v1h-1zM11 2h1v1h-1zM1 3h1v1h-1zM2 3h1v1h-1zM3 3h1v1h-1zM4 3h1v1h-1zM5 3h1v1h-1zM6 3h1v1h-1zM7 3h1v1h-1zM8 3h1v1h-1zM9 3h1v1h-1zM10 3h1v1h-1zM11 3h1v1h-1zM12 3h1v1h-1zM3 4h1v1h-1zM4 4h1v1h-1zM5 4h1v1h-1zM6 4h1v1h-1zM7 4h1v1h-1zM8 4h1v1h-1zM9 4h1v1h-1zM10 4h1v1h-1zM1 6h1v1h-1zM2 6h1v1h-1zM3 6h1v1h-1zM4 6h1v1h-1zM5 6h1v1h-1zM6 6h1v1h-1zM7 6h1v1h-1zM8 6h1v1h-1zM9 6h1v1h-1zM10 6h1v1h-1zM11 6h1v1h-1zM12 6h1v1h-1zM1 7h1v1h-1zM2 7h1v1h-1zM3 7h1v1h-1zM4 7h1v1h-1zM5 7h1v1h-1zM6 7h1v1h-1zM7 7h1v1h-1zM8 7h1v1h-1zM9 7h1v1h-1zM10 7h1v1h-1zM11 7h1v1h-1zM12 7h1v1h-1zM1 8h1v1h-1zM2 8h1v1h-1zM3 8h1v1h-1zM4 8h1v1h-1zM5 8h1v1h-1zM6 8h1v1h-1zM7 8h1v1h-1zM8 8h1v1h-1zM9 8h1v1h-1zM10 8h1v1h-1zM11 8h1v1h-1zM12 8h1v1h-1zM1 9h1v1h-1zM2 9h1v1h-1zM3 9h1v1h-1zM4 9h1v1h-1zM5 9h1v1h-1zM6 9h1v1h-1zM7 9h1v1h-1zM8 9h1v1h-1zM9 9h1v1h-1zM10 9h1v1h-1zM11 9h1v1h-1zM12 9h1v1h-1zM1 10h1v1h-1zM2 10h1v1h-1zM3 10h1v1h-1zM4 10h1v1h-1zM5 10h1v1h-1zM6 10h1v1h-1zM7 10h1v1h-1zM8 10h1v1h-1zM9 10h1v1h-1zM10 10h1v1h-1zM11 10h1v1h-1zM12 10h1v1h-1zM2 11h1v1h-1zM3 11h1v1h-1zM4 11h1v1h-1zM5 11h1v1h-1zM6 11h1v1h-1zM7 11h1v1h-1zM8 11h1v1h-1zM9 11h1v1h-1zM10 11h1v1h-1zM11 11h1v1h-1zM4 12h1v1h-1zM5 12h1v1h-1zM6 12h1v1h-1zM7 12h1v1h-1zM8 12h1v1h-1zM9 12h1v1h-1z" fill="#c0c0c0"/></svg><div class="t11" style="left:39px;top:1px">RetailBanking</div>
<div class="a" style="left:32px;top:24px;width:7px;height:1px;background:repeating-linear-gradient(90deg,#808080 0 1px,transparent 1px 2px)"></div><div class="a" style="left:23px;top:20px;width:7px;height:7px;border:1px solid #808080;background:#fff"></div><div class="a" style="left:25px;top:24px;width:5px;height:1px;background:#000"></div><svg class="a" style="left:37px;top:17px" width="17" height="13" viewBox="0 0 17 13" shape-rendering="crispEdges"><path d="M4 0h1v1h-1zM5 0h1v1h-1zM6 0h1v1h-1zM7 0h1v1h-1zM8 0h1v1h-1zM3 1h1v1h-1zM9 1h1v1h-1zM2 2h1v1h-1zM10 2h1v1h-1zM11 2h1v1h-1zM12 2h1v1h-1zM13 2h1v1h-1zM14 2h1v1h-1zM15 2h1v1h-1zM2 3h1v1h-1zM15 3h1v1h-1zM2 4h1v1h-1zM15 4h1v1h-1zM1 5h1v1h-1zM2 5h1v1h-1zM3 5h1v1h-1zM4 5h1v1h-1zM5 5h1v1h-1zM6 5h1v1h-1zM7 5h1v1h-1zM8 5h1v1h-1zM9 5h1v1h-1zM10 5h1v1h-1zM11 5h1v1h-1zM12 5h1v1h-1zM13 5h1v1h-1zM15 5h1v1h-1zM0 6h1v1h-1zM1 6h1v1h-1zM15 6h1v1h-1zM2 7h1v1h-1zM15 7h1v1h-1zM2 8h1v1h-1zM2 9h1v1h-1zM3 10h1v1h-1zM3 11h1v1h-1z" fill="#808080"/><path d="M4 1h1v1h-1zM5 1h1v1h-1zM6 1h1v1h-1zM7 1h1v1h-1zM8 1h1v1h-1zM3 2h1v1h-1zM9 2h1v1h-1zM2 6h1v1h-1zM3 6h1v1h-1zM4 6h1v1h-1zM5 6h1v1h-1zM6 6h1v1h-1zM7 6h1v1h-1zM8 6h1v1h-1zM9 6h1v1h-1zM10 6h1v1h-1zM11 6h1v1h-1zM12 6h1v1h-1zM13 6h1v1h-1z" fill="#fff"/><path d="M4 2h1v1h-1zM6 2h1v1h-1zM8 2h1v1h-1zM3 3h1v1h-1zM5 3h1v1h-1zM7 3h1v1h-1zM9 3h1v1h-1zM11 3h1v1h-1zM13 3h1v1h-1zM4 4h1v1h-1zM6 4h1v1h-1zM8 4h1v1h-1zM10 4h1v1h-1zM12 4h1v1h-1zM14 4h1v1h-1zM3 7h1v1h-1zM5 7h1v1h-1zM7 7h1v1h-1zM9 7h1v1h-1zM11 7h1v1h-1zM13 7h1v1h-1zM4 8h1v1h-1zM6 8h1v1h-1zM8 8h1v1h-1zM10 8h1v1h-1zM12 8h1v1h-1zM14 8h1v1h-1zM3 9h1v1h-1zM5 9h1v1h-1zM7 9h1v1h-1zM9 9h1v1h-1zM11 9h1v1h-1zM13 9h1v1h-1zM4 10h1v1h-1zM6 10h1v1h-1zM8 10h1v1h-1zM10 10h1v1h-1zM12 10h1v1h-1zM14 10h1v1h-1zM5 11h1v1h-1zM7 11h1v1h-1zM9 11h1v1h-1zM11 11h1v1h-1zM13 11h1v1h-1zM15 11h1v1h-1z" fill="#c0c0c0"/><path d="M5 2h1v1h-1zM7 2h1v1h-1zM4 3h1v1h-1zM6 3h1v1h-1zM8 3h1v1h-1zM10 3h1v1h-1zM12 3h1v1h-1zM14 3h1v1h-1zM3 4h1v1h-1zM5 4h1v1h-1zM7 4h1v1h-1zM9 4h1v1h-1zM11 4h1v1h-1zM13 4h1v1h-1zM4 7h1v1h-1zM6 7h1v1h-1zM8 7h1v1h-1zM10 7h1v1h-1zM12 7h1v1h-1zM3 8h1v1h-1zM5 8h1v1h-1zM7 8h1v1h-1zM9 8h1v1h-1zM11 8h1v1h-1zM13 8h1v1h-1zM4 9h1v1h-1zM6 9h1v1h-1zM8 9h1v1h-1zM10 9h1v1h-1zM12 9h1v1h-1zM14 9h1v1h-1zM5 10h1v1h-1zM7 10h1v1h-1zM9 10h1v1h-1zM11 10h1v1h-1zM13 10h1v1h-1zM4 11h1v1h-1zM6 11h1v1h-1zM8 11h1v1h-1zM10 11h1v1h-1zM12 11h1v1h-1zM14 11h1v1h-1z" fill="#ffff00"/><path d="M16 3h1v1h-1zM16 4h1v1h-1zM14 5h1v1h-1zM16 5h1v1h-1zM14 6h1v1h-1zM16 6h1v1h-1zM14 7h1v1h-1zM16 7h1v1h-1zM15 8h1v1h-1zM16 8h1v1h-1zM15 9h1v1h-1zM16 9h1v1h-1zM15 10h1v1h-1zM16 10h1v1h-1zM16 11h1v1h-1zM4 12h1v1h-1zM5 12h1v1h-1zM6 12h1v1h-1zM7 12h1v1h-1zM8 12h1v1h-1zM9 12h1v1h-1zM10 12h1v1h-1zM11 12h1v1h-1zM12 12h1v1h-1zM13 12h1v1h-1zM14 12h1v1h-1zM15 12h1v1h-1zM16 12h1v1h-1z" fill="#000"/></svg><div class="a" style="left:57px;top:16px;width:60px;height:16px;background:#3399ff"></div><div class="a" style="left:57px;top:16px;width:58px;height:14px;border:1px solid #f08a1a"></div><div class="a" style="left:57px;top:16px;width:60px;height:16px;background:repeating-linear-gradient(90deg,#000 0 1px,transparent 1px 2px) top/100% 1px no-repeat,repeating-linear-gradient(90deg,#000 0 1px,transparent 1px 2px) bottom/100% 1px no-repeat,repeating-linear-gradient(180deg,#000 0 1px,transparent 1px 2px) left/1px 100% no-repeat,repeating-linear-gradient(180deg,#000 0 1px,transparent 1px 2px) right/1px 100% no-repeat"></div><div class="t11" style="left:58.5px;top:17px;color:#fff">Fact Tables</div>
<div class="a" style="left:52px;top:40px;width:6px;height:1px;background:repeating-linear-gradient(90deg,#808080 0 1px,transparent 1px 2px)"></div><div class="a" style="left:42px;top:36px;width:7px;height:7px;border:1px solid #808080;background:#fff"></div><div class="a" style="left:44px;top:40px;width:5px;height:1px;background:#000"></div><div class="a" style="left:46px;top:38px;width:1px;height:5px;background:#000"></div><svg class="a" style="left:58px;top:34px" width="14" height="12" viewBox="0 0 14 12" shape-rendering="crispEdges"><path d="M0 0h1v1h-1zM1 0h1v1h-1zM2 0h1v1h-1zM3 0h1v1h-1zM4 0h1v1h-1zM5 0h1v1h-1zM6 0h1v1h-1zM7 0h1v1h-1zM8 0h1v1h-1zM9 0h1v1h-1zM10 0h1v1h-1zM11 0h1v1h-1zM12 0h1v1h-1zM13 0h1v1h-1zM0 1h1v1h-1zM13 1h1v1h-1zM0 2h1v1h-1zM13 2h1v1h-1zM0 3h1v1h-1zM13 3h1v1h-1zM0 4h1v1h-1zM13 4h1v1h-1zM0 5h1v1h-1zM13 5h1v1h-1zM0 6h1v1h-1zM13 6h1v1h-1zM0 7h1v1h-1zM13 7h1v1h-1zM0 8h1v1h-1zM13 8h1v1h-1zM0 9h1v1h-1zM13 9h1v1h-1zM0 10h1v1h-1zM13 10h1v1h-1zM0 11h1v1h-1zM1 11h1v1h-1zM2 11h1v1h-1zM3 11h1v1h-1zM4 11h1v1h-1zM5 11h1v1h-1zM6 11h1v1h-1zM7 11h1v1h-1zM8 11h1v1h-1zM9 11h1v1h-1zM10 11h1v1h-1zM11 11h1v1h-1zM12 11h1v1h-1zM13 11h1v1h-1z" fill="#000"/><path d="M1 1h1v1h-1zM2 1h1v1h-1zM3 1h1v1h-1zM4 1h1v1h-1zM5 1h1v1h-1zM6 1h1v1h-1zM7 1h1v1h-1zM8 1h1v1h-1zM9 1h1v1h-1zM10 1h1v1h-1zM11 1h1v1h-1zM12 1h1v1h-1zM1 2h1v1h-1zM2 2h1v1h-1zM3 2h1v1h-1zM4 2h1v1h-1zM5 2h1v1h-1zM6 2h1v1h-1zM7 2h1v1h-1zM8 2h1v1h-1zM9 2h1v1h-1zM10 2h1v1h-1zM11 2h1v1h-1zM12 2h1v1h-1zM1 3h1v1h-1zM2 3h1v1h-1zM3 3h1v1h-1zM4 3h1v1h-1zM5 3h1v1h-1zM6 3h1v1h-1zM7 3h1v1h-1zM8 3h1v1h-1zM9 3h1v1h-1zM10 3h1v1h-1zM11 3h1v1h-1zM12 3h1v1h-1z" fill="#800000"/><path d="M1 4h1v1h-1zM2 4h1v1h-1zM3 4h1v1h-1zM4 4h1v1h-1zM5 4h1v1h-1zM6 4h1v1h-1zM7 4h1v1h-1zM8 4h1v1h-1zM9 4h1v1h-1zM10 4h1v1h-1zM11 4h1v1h-1zM12 4h1v1h-1zM1 5h1v1h-1zM5 5h1v1h-1zM8 5h1v1h-1zM12 5h1v1h-1zM1 6h1v1h-1zM2 6h1v1h-1zM3 6h1v1h-1zM4 6h1v1h-1zM5 6h1v1h-1zM6 6h1v1h-1zM7 6h1v1h-1zM8 6h1v1h-1zM9 6h1v1h-1zM10 6h1v1h-1zM11 6h1v1h-1zM12 6h1v1h-1zM1 7h1v1h-1zM5 7h1v1h-1zM8 7h1v1h-1zM12 7h1v1h-1zM1 8h1v1h-1zM2 8h1v1h-1zM3 8h1v1h-1zM4 8h1v1h-1zM5 8h1v1h-1zM6 8h1v1h-1zM7 8h1v1h-1zM8 8h1v1h-1zM9 8h1v1h-1zM10 8h1v1h-1zM11 8h1v1h-1zM12 8h1v1h-1zM1 9h1v1h-1zM5 9h1v1h-1zM8 9h1v1h-1zM12 9h1v1h-1zM1 10h1v1h-1zM2 10h1v1h-1zM3 10h1v1h-1zM4 10h1v1h-1zM5 10h1v1h-1zM6 10h1v1h-1zM7 10h1v1h-1zM8 10h1v1h-1zM9 10h1v1h-1zM10 10h1v1h-1zM11 10h1v1h-1zM12 10h1v1h-1z" fill="#fff"/><path d="M2 5h1v1h-1zM3 5h1v1h-1zM4 5h1v1h-1zM6 5h1v1h-1zM7 5h1v1h-1zM9 5h1v1h-1zM10 5h1v1h-1zM11 5h1v1h-1zM2 7h1v1h-1zM3 7h1v1h-1zM4 7h1v1h-1zM6 7h1v1h-1zM7 7h1v1h-1zM9 7h1v1h-1zM10 7h1v1h-1zM11 7h1v1h-1zM2 9h1v1h-1zM3 9h1v1h-1zM4 9h1v1h-1zM6 9h1v1h-1zM7 9h1v1h-1zM9 9h1v1h-1zM10 9h1v1h-1zM11 9h1v1h-1z" fill="#808080"/></svg><div class="t11" style="left:77px;top:33px">Accounts</div>
<div class="a" style="left:52px;top:56px;width:6px;height:1px;background:repeating-linear-gradient(90deg,#808080 0 1px,transparent 1px 2px)"></div><div class="a" style="left:42px;top:52px;width:7px;height:7px;border:1px solid #808080;background:#fff"></div><div class="a" style="left:44px;top:56px;width:5px;height:1px;background:#000"></div><div class="a" style="left:46px;top:54px;width:1px;height:5px;background:#000"></div><svg class="a" style="left:58px;top:50px" width="14" height="12" viewBox="0 0 14 12" shape-rendering="crispEdges"><path d="M0 0h1v1h-1zM1 0h1v1h-1zM2 0h1v1h-1zM3 0h1v1h-1zM4 0h1v1h-1zM5 0h1v1h-1zM6 0h1v1h-1zM7 0h1v1h-1zM8 0h1v1h-1zM9 0h1v1h-1zM10 0h1v1h-1zM11 0h1v1h-1zM12 0h1v1h-1zM13 0h1v1h-1zM0 1h1v1h-1zM13 1h1v1h-1zM0 2h1v1h-1zM13 2h1v1h-1zM0 3h1v1h-1zM13 3h1v1h-1zM0 4h1v1h-1zM13 4h1v1h-1zM0 5h1v1h-1zM13 5h1v1h-1zM0 6h1v1h-1zM13 6h1v1h-1zM0 7h1v1h-1zM13 7h1v1h-1zM0 8h1v1h-1zM13 8h1v1h-1zM0 9h1v1h-1zM13 9h1v1h-1zM0 10h1v1h-1zM13 10h1v1h-1zM0 11h1v1h-1zM1 11h1v1h-1zM2 11h1v1h-1zM3 11h1v1h-1zM4 11h1v1h-1zM5 11h1v1h-1zM6 11h1v1h-1zM7 11h1v1h-1zM8 11h1v1h-1zM9 11h1v1h-1zM10 11h1v1h-1zM11 11h1v1h-1zM12 11h1v1h-1zM13 11h1v1h-1z" fill="#000"/><path d="M1 1h1v1h-1zM2 1h1v1h-1zM3 1h1v1h-1zM4 1h1v1h-1zM5 1h1v1h-1zM6 1h1v1h-1zM7 1h1v1h-1zM8 1h1v1h-1zM9 1h1v1h-1zM10 1h1v1h-1zM11 1h1v1h-1zM12 1h1v1h-1zM1 2h1v1h-1zM2 2h1v1h-1zM3 2h1v1h-1zM4 2h1v1h-1zM5 2h1v1h-1zM6 2h1v1h-1zM7 2h1v1h-1zM8 2h1v1h-1zM9 2h1v1h-1zM10 2h1v1h-1zM11 2h1v1h-1zM12 2h1v1h-1zM1 3h1v1h-1zM2 3h1v1h-1zM3 3h1v1h-1zM4 3h1v1h-1zM5 3h1v1h-1zM6 3h1v1h-1zM7 3h1v1h-1zM8 3h1v1h-1zM9 3h1v1h-1zM10 3h1v1h-1zM11 3h1v1h-1zM12 3h1v1h-1z" fill="#800000"/><path d="M1 4h1v1h-1zM2 4h1v1h-1zM3 4h1v1h-1zM4 4h1v1h-1zM5 4h1v1h-1zM6 4h1v1h-1zM7 4h1v1h-1zM8 4h1v1h-1zM9 4h1v1h-1zM10 4h1v1h-1zM11 4h1v1h-1zM12 4h1v1h-1zM1 5h1v1h-1zM5 5h1v1h-1zM8 5h1v1h-1zM12 5h1v1h-1zM1 6h1v1h-1zM2 6h1v1h-1zM3 6h1v1h-1zM4 6h1v1h-1zM5 6h1v1h-1zM6 6h1v1h-1zM7 6h1v1h-1zM8 6h1v1h-1zM9 6h1v1h-1zM10 6h1v1h-1zM11 6h1v1h-1zM12 6h1v1h-1zM1 7h1v1h-1zM5 7h1v1h-1zM8 7h1v1h-1zM12 7h1v1h-1zM1 8h1v1h-1zM2 8h1v1h-1zM3 8h1v1h-1zM4 8h1v1h-1zM5 8h1v1h-1zM6 8h1v1h-1zM7 8h1v1h-1zM8 8h1v1h-1zM9 8h1v1h-1zM10 8h1v1h-1zM11 8h1v1h-1zM12 8h1v1h-1zM1 9h1v1h-1zM5 9h1v1h-1zM8 9h1v1h-1zM12 9h1v1h-1zM1 10h1v1h-1zM2 10h1v1h-1zM3 10h1v1h-1zM4 10h1v1h-1zM5 10h1v1h-1zM6 10h1v1h-1zM7 10h1v1h-1zM8 10h1v1h-1zM9 10h1v1h-1zM10 10h1v1h-1zM11 10h1v1h-1zM12 10h1v1h-1z" fill="#fff"/><path d="M2 5h1v1h-1zM3 5h1v1h-1zM4 5h1v1h-1zM6 5h1v1h-1zM7 5h1v1h-1zM9 5h1v1h-1zM10 5h1v1h-1zM11 5h1v1h-1zM2 7h1v1h-1zM3 7h1v1h-1zM4 7h1v1h-1zM6 7h1v1h-1zM7 7h1v1h-1zM9 7h1v1h-1zM10 7h1v1h-1zM11 7h1v1h-1zM2 9h1v1h-1zM3 9h1v1h-1zM4 9h1v1h-1zM6 9h1v1h-1zM7 9h1v1h-1zM9 9h1v1h-1zM10 9h1v1h-1zM11 9h1v1h-1z" fill="#808080"/></svg><svg class="a" style="left:64px;top:47px" width="10" height="10" viewBox="0 0 10 10" shape-rendering="crispEdges"><path d="M2 5h7v1h-7zM5 2h1v7h-1z" fill="#000080"/><path d="M1 4h7v1h-7zM4 1h1v7h-1z" fill="#00ffff"/></svg><div class="t11" style="left:77px;top:49px">Customers</div>
<div class="a" style="left:32px;top:72px;width:7px;height:1px;background:repeating-linear-gradient(90deg,#808080 0 1px,transparent 1px 2px)"></div><div class="a" style="left:23px;top:68px;width:7px;height:7px;border:1px solid #808080;background:#fff"></div><div class="a" style="left:25px;top:72px;width:5px;height:1px;background:#000"></div><svg class="a" style="left:39px;top:65px" width="15" height="13" viewBox="0 0 15 13" shape-rendering="crispEdges"><path d="M2 0h1v1h-1zM3 0h1v1h-1zM4 0h1v1h-1zM5 0h1v1h-1zM6 0h1v1h-1zM1 1h1v1h-1zM7 1h1v1h-1zM0 2h1v1h-1zM8 2h1v1h-1zM9 2h1v1h-1zM10 2h1v1h-1zM11 2h1v1h-1zM12 2h1v1h-1zM13 2h1v1h-1zM0 3h1v1h-1zM0 4h1v1h-1zM0 5h1v1h-1zM0 6h1v1h-1zM0 7h1v1h-1zM0 8h1v1h-1zM0 9h1v1h-1zM0 10h1v1h-1zM0 11h1v1h-1zM1 11h1v1h-1zM2 11h1v1h-1zM3 11h1v1h-1zM4 11h1v1h-1zM5 11h1v1h-1zM6 11h1v1h-1zM7 11h1v1h-1zM8 11h1v1h-1zM9 11h1v1h-1zM10 11h1v1h-1zM11 11h1v1h-1zM12 11h1v1h-1zM13 11h1v1h-1z" fill="#808080"/><path d="M2 1h1v1h-1zM4 1h1v1h-1zM6 1h1v1h-1zM1 2h1v1h-1zM3 2h1v1h-1zM5 2h1v1h-1zM7 2h1v1h-1zM3 4h1v1h-1zM5 4h1v1h-1zM7 4h1v1h-1zM9 4h1v1h-1zM11 4h1v1h-1zM2 5h1v1h-1zM4 5h1v1h-1zM6 5h1v1h-1zM8 5h1v1h-1zM10 5h1v1h-1zM12 5h1v1h-1zM3 6h1v1h-1zM5 6h1v1h-1zM7 6h1v1h-1zM9 6h1v1h-1zM11 6h1v1h-1zM2 7h1v1h-1zM4 7h1v1h-1zM6 7h1v1h-1zM8 7h1v1h-1zM10 7h1v1h-1zM12 7h1v1h-1zM3 8h1v1h-1zM5 8h1v1h-1zM7 8h1v1h-1zM9 8h1v1h-1zM11 8h1v1h-1zM2 9h1v1h-1zM4 9h1v1h-1zM6 9h1v1h-1zM8 9h1v1h-1zM10 9h1v1h-1zM12 9h1v1h-1zM3 10h1v1h-1zM5 10h1v1h-1zM7 10h1v1h-1zM9 10h1v1h-1zM11 10h1v1h-1z" fill="#ffff00"/><path d="M3 1h1v1h-1zM5 1h1v1h-1zM2 2h1v1h-1zM4 2h1v1h-1zM6 2h1v1h-1zM13 3h1v1h-1zM2 4h1v1h-1zM4 4h1v1h-1zM6 4h1v1h-1zM8 4h1v1h-1zM10 4h1v1h-1zM12 4h1v1h-1zM13 4h1v1h-1zM3 5h1v1h-1zM5 5h1v1h-1zM7 5h1v1h-1zM9 5h1v1h-1zM11 5h1v1h-1zM13 5h1v1h-1zM2 6h1v1h-1zM4 6h1v1h-1zM6 6h1v1h-1zM8 6h1v1h-1zM10 6h1v1h-1zM12 6h1v1h-1zM13 6h1v1h-1zM3 7h1v1h-1zM5 7h1v1h-1zM7 7h1v1h-1zM9 7h1v1h-1zM11 7h1v1h-1zM13 7h1v1h-1zM2 8h1v1h-1zM4 8h1v1h-1zM6 8h1v1h-1zM8 8h1v1h-1zM10 8h1v1h-1zM12 8h1v1h-1zM13 8h1v1h-1zM3 9h1v1h-1zM5 9h1v1h-1zM7 9h1v1h-1zM9 9h1v1h-1zM11 9h1v1h-1zM13 9h1v1h-1zM2 10h1v1h-1zM4 10h1v1h-1zM6 10h1v1h-1zM8 10h1v1h-1zM10 10h1v1h-1zM12 10h1v1h-1zM13 10h1v1h-1z" fill="#c0c0c0"/><path d="M1 3h1v1h-1zM2 3h1v1h-1zM3 3h1v1h-1zM4 3h1v1h-1zM5 3h1v1h-1zM6 3h1v1h-1zM7 3h1v1h-1zM8 3h1v1h-1zM9 3h1v1h-1zM10 3h1v1h-1zM11 3h1v1h-1zM12 3h1v1h-1zM1 4h1v1h-1zM1 5h1v1h-1zM1 6h1v1h-1zM1 7h1v1h-1zM1 8h1v1h-1zM1 9h1v1h-1zM1 10h1v1h-1z" fill="#fff"/><path d="M14 3h1v1h-1zM14 4h1v1h-1zM14 5h1v1h-1zM14 6h1v1h-1zM14 7h1v1h-1zM14 8h1v1h-1zM14 9h1v1h-1zM14 10h1v1h-1zM14 11h1v1h-1zM1 12h1v1h-1zM2 12h1v1h-1zM3 12h1v1h-1zM4 12h1v1h-1zM5 12h1v1h-1zM6 12h1v1h-1zM7 12h1v1h-1zM8 12h1v1h-1zM9 12h1v1h-1zM10 12h1v1h-1zM11 12h1v1h-1zM12 12h1v1h-1zM13 12h1v1h-1zM14 12h1v1h-1z" fill="#000"/></svg><div class="t11" style="left:58.5px;top:65px">Classifications</div>
<div class="a" style="left:52px;top:88px;width:6px;height:1px;background:repeating-linear-gradient(90deg,#808080 0 1px,transparent 1px 2px)"></div><div class="a" style="left:42px;top:84px;width:7px;height:7px;border:1px solid #808080;background:#fff"></div><div class="a" style="left:44px;top:88px;width:5px;height:1px;background:#000"></div><div class="a" style="left:46px;top:86px;width:1px;height:5px;background:#000"></div><svg class="a" style="left:58px;top:82px" width="14" height="12" viewBox="0 0 14 12" shape-rendering="crispEdges"><path d="M0 0h1v1h-1zM1 0h1v1h-1zM2 0h1v1h-1zM3 0h1v1h-1zM4 0h1v1h-1zM5 0h1v1h-1zM6 0h1v1h-1zM7 0h1v1h-1zM8 0h1v1h-1zM9 0h1v1h-1zM10 0h1v1h-1zM11 0h1v1h-1zM12 0h1v1h-1zM13 0h1v1h-1zM0 1h1v1h-1zM13 1h1v1h-1zM0 2h1v1h-1zM13 2h1v1h-1zM0 3h1v1h-1zM13 3h1v1h-1zM0 4h1v1h-1zM13 4h1v1h-1zM0 5h1v1h-1zM13 5h1v1h-1zM0 6h1v1h-1zM13 6h1v1h-1zM0 7h1v1h-1zM13 7h1v1h-1zM0 8h1v1h-1zM13 8h1v1h-1zM0 9h1v1h-1zM13 9h1v1h-1zM0 10h1v1h-1zM13 10h1v1h-1zM0 11h1v1h-1zM1 11h1v1h-1zM2 11h1v1h-1zM3 11h1v1h-1zM4 11h1v1h-1zM5 11h1v1h-1zM6 11h1v1h-1zM7 11h1v1h-1zM8 11h1v1h-1zM9 11h1v1h-1zM10 11h1v1h-1zM11 11h1v1h-1zM12 11h1v1h-1zM13 11h1v1h-1z" fill="#000"/><path d="M1 1h1v1h-1zM2 1h1v1h-1zM3 1h1v1h-1zM4 1h1v1h-1zM5 1h1v1h-1zM6 1h1v1h-1zM7 1h1v1h-1zM8 1h1v1h-1zM9 1h1v1h-1zM10 1h1v1h-1zM11 1h1v1h-1zM12 1h1v1h-1zM1 2h1v1h-1zM2 2h1v1h-1zM3 2h1v1h-1zM4 2h1v1h-1zM5 2h1v1h-1zM6 2h1v1h-1zM7 2h1v1h-1zM8 2h1v1h-1zM9 2h1v1h-1zM10 2h1v1h-1zM11 2h1v1h-1zM12 2h1v1h-1zM1 3h1v1h-1zM2 3h1v1h-1zM3 3h1v1h-1zM4 3h1v1h-1zM5 3h1v1h-1zM6 3h1v1h-1zM7 3h1v1h-1zM8 3h1v1h-1zM9 3h1v1h-1zM10 3h1v1h-1zM11 3h1v1h-1zM12 3h1v1h-1z" fill="#008000"/><path d="M1 4h1v1h-1zM2 4h1v1h-1zM3 4h1v1h-1zM4 4h1v1h-1zM5 4h1v1h-1zM6 4h1v1h-1zM7 4h1v1h-1zM8 4h1v1h-1zM9 4h1v1h-1zM10 4h1v1h-1zM11 4h1v1h-1zM12 4h1v1h-1zM1 5h1v1h-1zM5 5h1v1h-1zM8 5h1v1h-1zM12 5h1v1h-1zM1 6h1v1h-1zM2 6h1v1h-1zM3 6h1v1h-1zM4 6h1v1h-1zM5 6h1v1h-1zM6 6h1v1h-1zM7 6h1v1h-1zM8 6h1v1h-1zM9 6h1v1h-1zM10 6h1v1h-1zM11 6h1v1h-1zM12 6h1v1h-1zM1 7h1v1h-1zM5 7h1v1h-1zM8 7h1v1h-1zM12 7h1v1h-1zM1 8h1v1h-1zM2 8h1v1h-1zM3 8h1v1h-1zM4 8h1v1h-1zM5 8h1v1h-1zM6 8h1v1h-1zM7 8h1v1h-1zM8 8h1v1h-1zM9 8h1v1h-1zM10 8h1v1h-1zM11 8h1v1h-1zM12 8h1v1h-1zM1 9h1v1h-1zM5 9h1v1h-1zM8 9h1v1h-1zM12 9h1v1h-1zM1 10h1v1h-1zM2 10h1v1h-1zM3 10h1v1h-1zM4 10h1v1h-1zM5 10h1v1h-1zM6 10h1v1h-1zM7 10h1v1h-1zM8 10h1v1h-1zM9 10h1v1h-1zM10 10h1v1h-1zM11 10h1v1h-1zM12 10h1v1h-1z" fill="#fff"/><path d="M2 5h1v1h-1zM3 5h1v1h-1zM4 5h1v1h-1zM6 5h1v1h-1zM7 5h1v1h-1zM9 5h1v1h-1zM10 5h1v1h-1zM11 5h1v1h-1zM2 7h1v1h-1zM3 7h1v1h-1zM4 7h1v1h-1zM6 7h1v1h-1zM7 7h1v1h-1zM9 7h1v1h-1zM10 7h1v1h-1zM11 7h1v1h-1zM2 9h1v1h-1zM3 9h1v1h-1zM4 9h1v1h-1zM6 9h1v1h-1zM7 9h1v1h-1zM9 9h1v1h-1zM10 9h1v1h-1zM11 9h1v1h-1z" fill="#808080"/></svg><div class="t11" style="left:77px;top:81px">10 Years Group</div>
<div class="a" style="left:52px;top:104px;width:6px;height:1px;background:repeating-linear-gradient(90deg,#808080 0 1px,transparent 1px 2px)"></div><div class="a" style="left:42px;top:100px;width:7px;height:7px;border:1px solid #808080;background:#fff"></div><div class="a" style="left:44px;top:104px;width:5px;height:1px;background:#000"></div><div class="a" style="left:46px;top:102px;width:1px;height:5px;background:#000"></div><svg class="a" style="left:58px;top:98px" width="14" height="12" viewBox="0 0 14 12" shape-rendering="crispEdges"><path d="M0 0h1v1h-1zM1 0h1v1h-1zM2 0h1v1h-1zM3 0h1v1h-1zM4 0h1v1h-1zM5 0h1v1h-1zM6 0h1v1h-1zM7 0h1v1h-1zM8 0h1v1h-1zM9 0h1v1h-1zM10 0h1v1h-1zM11 0h1v1h-1zM12 0h1v1h-1zM13 0h1v1h-1zM0 1h1v1h-1zM13 1h1v1h-1zM0 2h1v1h-1zM13 2h1v1h-1zM0 3h1v1h-1zM13 3h1v1h-1zM0 4h1v1h-1zM13 4h1v1h-1zM0 5h1v1h-1zM13 5h1v1h-1zM0 6h1v1h-1zM13 6h1v1h-1zM0 7h1v1h-1zM13 7h1v1h-1zM0 8h1v1h-1zM13 8h1v1h-1zM0 9h1v1h-1zM13 9h1v1h-1zM0 10h1v1h-1zM13 10h1v1h-1zM0 11h1v1h-1zM1 11h1v1h-1zM2 11h1v1h-1zM3 11h1v1h-1zM4 11h1v1h-1zM5 11h1v1h-1zM6 11h1v1h-1zM7 11h1v1h-1zM8 11h1v1h-1zM9 11h1v1h-1zM10 11h1v1h-1zM11 11h1v1h-1zM12 11h1v1h-1zM13 11h1v1h-1z" fill="#000"/><path d="M1 1h1v1h-1zM2 1h1v1h-1zM3 1h1v1h-1zM4 1h1v1h-1zM5 1h1v1h-1zM6 1h1v1h-1zM7 1h1v1h-1zM8 1h1v1h-1zM9 1h1v1h-1zM10 1h1v1h-1zM11 1h1v1h-1zM12 1h1v1h-1zM1 2h1v1h-1zM2 2h1v1h-1zM3 2h1v1h-1zM4 2h1v1h-1zM5 2h1v1h-1zM6 2h1v1h-1zM7 2h1v1h-1zM8 2h1v1h-1zM9 2h1v1h-1zM10 2h1v1h-1zM11 2h1v1h-1zM12 2h1v1h-1zM1 3h1v1h-1zM2 3h1v1h-1zM3 3h1v1h-1zM4 3h1v1h-1zM5 3h1v1h-1zM6 3h1v1h-1zM7 3h1v1h-1zM8 3h1v1h-1zM9 3h1v1h-1zM10 3h1v1h-1zM11 3h1v1h-1zM12 3h1v1h-1z" fill="#008000"/><path d="M1 4h1v1h-1zM2 4h1v1h-1zM3 4h1v1h-1zM4 4h1v1h-1zM5 4h1v1h-1zM6 4h1v1h-1zM7 4h1v1h-1zM8 4h1v1h-1zM9 4h1v1h-1zM10 4h1v1h-1zM11 4h1v1h-1zM12 4h1v1h-1zM1 5h1v1h-1zM5 5h1v1h-1zM8 5h1v1h-1zM12 5h1v1h-1zM1 6h1v1h-1zM2 6h1v1h-1zM3 6h1v1h-1zM4 6h1v1h-1zM5 6h1v1h-1zM6 6h1v1h-1zM7 6h1v1h-1zM8 6h1v1h-1zM9 6h1v1h-1zM10 6h1v1h-1zM11 6h1v1h-1zM12 6h1v1h-1zM1 7h1v1h-1zM5 7h1v1h-1zM8 7h1v1h-1zM12 7h1v1h-1zM1 8h1v1h-1zM2 8h1v1h-1zM3 8h1v1h-1zM4 8h1v1h-1zM5 8h1v1h-1zM6 8h1v1h-1zM7 8h1v1h-1zM8 8h1v1h-1zM9 8h1v1h-1zM10 8h1v1h-1zM11 8h1v1h-1zM12 8h1v1h-1zM1 9h1v1h-1zM5 9h1v1h-1zM8 9h1v1h-1zM12 9h1v1h-1zM1 10h1v1h-1zM2 10h1v1h-1zM3 10h1v1h-1zM4 10h1v1h-1zM5 10h1v1h-1zM6 10h1v1h-1zM7 10h1v1h-1zM8 10h1v1h-1zM9 10h1v1h-1zM10 10h1v1h-1zM11 10h1v1h-1zM12 10h1v1h-1z" fill="#fff"/><path d="M2 5h1v1h-1zM3 5h1v1h-1zM4 5h1v1h-1zM6 5h1v1h-1zM7 5h1v1h-1zM9 5h1v1h-1zM10 5h1v1h-1zM11 5h1v1h-1zM2 7h1v1h-1zM3 7h1v1h-1zM4 7h1v1h-1zM6 7h1v1h-1zM7 7h1v1h-1zM9 7h1v1h-1zM10 7h1v1h-1zM11 7h1v1h-1zM2 9h1v1h-1zM3 9h1v1h-1zM4 9h1v1h-1zM6 9h1v1h-1zM7 9h1v1h-1zM9 9h1v1h-1zM10 9h1v1h-1zM11 9h1v1h-1z" fill="#808080"/></svg><div class="t11" style="left:77px;top:97px">5 Years Group</div>
<div class="a" style="left:52px;top:120px;width:6px;height:1px;background:repeating-linear-gradient(90deg,#808080 0 1px,transparent 1px 2px)"></div><div class="a" style="left:42px;top:116px;width:7px;height:7px;border:1px solid #808080;background:#fff"></div><div class="a" style="left:44px;top:120px;width:5px;height:1px;background:#000"></div><div class="a" style="left:46px;top:118px;width:1px;height:5px;background:#000"></div><svg class="a" style="left:58px;top:114px" width="14" height="12" viewBox="0 0 14 12" shape-rendering="crispEdges"><path d="M0 0h1v1h-1zM1 0h1v1h-1zM2 0h1v1h-1zM3 0h1v1h-1zM4 0h1v1h-1zM5 0h1v1h-1zM6 0h1v1h-1zM7 0h1v1h-1zM8 0h1v1h-1zM9 0h1v1h-1zM10 0h1v1h-1zM11 0h1v1h-1zM12 0h1v1h-1zM13 0h1v1h-1zM0 1h1v1h-1zM13 1h1v1h-1zM0 2h1v1h-1zM13 2h1v1h-1zM0 3h1v1h-1zM13 3h1v1h-1zM0 4h1v1h-1zM13 4h1v1h-1zM0 5h1v1h-1zM13 5h1v1h-1zM0 6h1v1h-1zM13 6h1v1h-1zM0 7h1v1h-1zM13 7h1v1h-1zM0 8h1v1h-1zM13 8h1v1h-1zM0 9h1v1h-1zM13 9h1v1h-1zM0 10h1v1h-1zM13 10h1v1h-1zM0 11h1v1h-1zM1 11h1v1h-1zM2 11h1v1h-1zM3 11h1v1h-1zM4 11h1v1h-1zM5 11h1v1h-1zM6 11h1v1h-1zM7 11h1v1h-1zM8 11h1v1h-1zM9 11h1v1h-1zM10 11h1v1h-1zM11 11h1v1h-1zM12 11h1v1h-1zM13 11h1v1h-1z" fill="#000"/><path d="M1 1h1v1h-1zM2 1h1v1h-1zM3 1h1v1h-1zM4 1h1v1h-1zM5 1h1v1h-1zM6 1h1v1h-1zM7 1h1v1h-1zM8 1h1v1h-1zM9 1h1v1h-1zM10 1h1v1h-1zM11 1h1v1h-1zM12 1h1v1h-1zM1 2h1v1h-1zM2 2h1v1h-1zM3 2h1v1h-1zM4 2h1v1h-1zM5 2h1v1h-1zM6 2h1v1h-1zM7 2h1v1h-1zM8 2h1v1h-1zM9 2h1v1h-1zM10 2h1v1h-1zM11 2h1v1h-1zM12 2h1v1h-1zM1 3h1v1h-1zM2 3h1v1h-1zM3 3h1v1h-1zM4 3h1v1h-1zM5 3h1v1h-1zM6 3h1v1h-1zM7 3h1v1h-1zM8 3h1v1h-1zM9 3h1v1h-1zM10 3h1v1h-1zM11 3h1v1h-1zM12 3h1v1h-1z" fill="#008000"/><path d="M1 4h1v1h-1zM2 4h1v1h-1zM3 4h1v1h-1zM4 4h1v1h-1zM5 4h1v1h-1zM6 4h1v1h-1zM7 4h1v1h-1zM8 4h1v1h-1zM9 4h1v1h-1zM10 4h1v1h-1zM11 4h1v1h-1zM12 4h1v1h-1zM1 5h1v1h-1zM5 5h1v1h-1zM8 5h1v1h-1zM12 5h1v1h-1zM1 6h1v1h-1zM2 6h1v1h-1zM3 6h1v1h-1zM4 6h1v1h-1zM5 6h1v1h-1zM6 6h1v1h-1zM7 6h1v1h-1zM8 6h1v1h-1zM9 6h1v1h-1zM10 6h1v1h-1zM11 6h1v1h-1zM12 6h1v1h-1zM1 7h1v1h-1zM5 7h1v1h-1zM8 7h1v1h-1zM12 7h1v1h-1zM1 8h1v1h-1zM2 8h1v1h-1zM3 8h1v1h-1zM4 8h1v1h-1zM5 8h1v1h-1zM6 8h1v1h-1zM7 8h1v1h-1zM8 8h1v1h-1zM9 8h1v1h-1zM10 8h1v1h-1zM11 8h1v1h-1zM12 8h1v1h-1zM1 9h1v1h-1zM5 9h1v1h-1zM8 9h1v1h-1zM12 9h1v1h-1zM1 10h1v1h-1zM2 10h1v1h-1zM3 10h1v1h-1zM4 10h1v1h-1zM5 10h1v1h-1zM6 10h1v1h-1zM7 10h1v1h-1zM8 10h1v1h-1zM9 10h1v1h-1zM10 10h1v1h-1zM11 10h1v1h-1zM12 10h1v1h-1z" fill="#fff"/><path d="M2 5h1v1h-1zM3 5h1v1h-1zM4 5h1v1h-1zM6 5h1v1h-1zM7 5h1v1h-1zM9 5h1v1h-1zM10 5h1v1h-1zM11 5h1v1h-1zM2 7h1v1h-1zM3 7h1v1h-1zM4 7h1v1h-1zM6 7h1v1h-1zM7 7h1v1h-1zM9 7h1v1h-1zM10 7h1v1h-1zM11 7h1v1h-1zM2 9h1v1h-1zM3 9h1v1h-1zM4 9h1v1h-1zM6 9h1v1h-1zM7 9h1v1h-1zM9 9h1v1h-1zM10 9h1v1h-1zM11 9h1v1h-1z" fill="#808080"/></svg><div class="t11" style="left:77px;top:113px">C_Age</div>
<div class="a" style="left:52px;top:136px;width:6px;height:1px;background:repeating-linear-gradient(90deg,#808080 0 1px,transparent 1px 2px)"></div><div class="a" style="left:42px;top:132px;width:7px;height:7px;border:1px solid #808080;background:#fff"></div><div class="a" style="left:44px;top:136px;width:5px;height:1px;background:#000"></div><div class="a" style="left:46px;top:134px;width:1px;height:5px;background:#000"></div><svg class="a" style="left:58px;top:130px" width="14" height="12" viewBox="0 0 14 12" shape-rendering="crispEdges"><path d="M0 0h1v1h-1zM1 0h1v1h-1zM2 0h1v1h-1zM3 0h1v1h-1zM4 0h1v1h-1zM5 0h1v1h-1zM6 0h1v1h-1zM7 0h1v1h-1zM8 0h1v1h-1zM9 0h1v1h-1zM10 0h1v1h-1zM11 0h1v1h-1zM12 0h1v1h-1zM13 0h1v1h-1zM0 1h1v1h-1zM13 1h1v1h-1zM0 2h1v1h-1zM13 2h1v1h-1zM0 3h1v1h-1zM13 3h1v1h-1zM0 4h1v1h-1zM13 4h1v1h-1zM0 5h1v1h-1zM13 5h1v1h-1zM0 6h1v1h-1zM13 6h1v1h-1zM0 7h1v1h-1zM13 7h1v1h-1zM0 8h1v1h-1zM13 8h1v1h-1zM0 9h1v1h-1zM13 9h1v1h-1zM0 10h1v1h-1zM13 10h1v1h-1zM0 11h1v1h-1zM1 11h1v1h-1zM2 11h1v1h-1zM3 11h1v1h-1zM4 11h1v1h-1zM5 11h1v1h-1zM6 11h1v1h-1zM7 11h1v1h-1zM8 11h1v1h-1zM9 11h1v1h-1zM10 11h1v1h-1zM11 11h1v1h-1zM12 11h1v1h-1zM13 11h1v1h-1z" fill="#000"/><path d="M1 1h1v1h-1zM2 1h1v1h-1zM3 1h1v1h-1zM4 1h1v1h-1zM5 1h1v1h-1zM6 1h1v1h-1zM7 1h1v1h-1zM8 1h1v1h-1zM9 1h1v1h-1zM10 1h1v1h-1zM11 1h1v1h-1zM12 1h1v1h-1zM1 2h1v1h-1zM2 2h1v1h-1zM3 2h1v1h-1zM4 2h1v1h-1zM5 2h1v1h-1zM6 2h1v1h-1zM7 2h1v1h-1zM8 2h1v1h-1zM9 2h1v1h-1zM10 2h1v1h-1zM11 2h1v1h-1zM12 2h1v1h-1zM1 3h1v1h-1zM2 3h1v1h-1zM3 3h1v1h-1zM4 3h1v1h-1zM5 3h1v1h-1zM6 3h1v1h-1zM7 3h1v1h-1zM8 3h1v1h-1zM9 3h1v1h-1zM10 3h1v1h-1zM11 3h1v1h-1zM12 3h1v1h-1z" fill="#008000"/><path d="M1 4h1v1h-1zM2 4h1v1h-1zM3 4h1v1h-1zM4 4h1v1h-1zM5 4h1v1h-1zM6 4h1v1h-1zM7 4h1v1h-1zM8 4h1v1h-1zM9 4h1v1h-1zM10 4h1v1h-1zM11 4h1v1h-1zM12 4h1v1h-1zM1 5h1v1h-1zM5 5h1v1h-1zM8 5h1v1h-1zM12 5h1v1h-1zM1 6h1v1h-1zM2 6h1v1h-1zM3 6h1v1h-1zM4 6h1v1h-1zM5 6h1v1h-1zM6 6h1v1h-1zM7 6h1v1h-1zM8 6h1v1h-1zM9 6h1v1h-1zM10 6h1v1h-1zM11 6h1v1h-1zM12 6h1v1h-1zM1 7h1v1h-1zM5 7h1v1h-1zM8 7h1v1h-1zM12 7h1v1h-1zM1 8h1v1h-1zM2 8h1v1h-1zM3 8h1v1h-1zM4 8h1v1h-1zM5 8h1v1h-1zM6 8h1v1h-1zM7 8h1v1h-1zM8 8h1v1h-1zM9 8h1v1h-1zM10 8h1v1h-1zM11 8h1v1h-1zM12 8h1v1h-1zM1 9h1v1h-1zM5 9h1v1h-1zM8 9h1v1h-1zM12 9h1v1h-1zM1 10h1v1h-1zM2 10h1v1h-1zM3 10h1v1h-1zM4 10h1v1h-1zM5 10h1v1h-1zM6 10h1v1h-1zM7 10h1v1h-1zM8 10h1v1h-1zM9 10h1v1h-1zM10 10h1v1h-1zM11 10h1v1h-1zM12 10h1v1h-1z" fill="#fff"/><path d="M2 5h1v1h-1zM3 5h1v1h-1zM4 5h1v1h-1zM6 5h1v1h-1zM7 5h1v1h-1zM9 5h1v1h-1zM10 5h1v1h-1zM11 5h1v1h-1zM2 7h1v1h-1zM3 7h1v1h-1zM4 7h1v1h-1zM6 7h1v1h-1zM7 7h1v1h-1zM9 7h1v1h-1zM10 7h1v1h-1zM11 7h1v1h-1zM2 9h1v1h-1zM3 9h1v1h-1zM4 9h1v1h-1zM6 9h1v1h-1zM7 9h1v1h-1zM9 9h1v1h-1zM10 9h1v1h-1zM11 9h1v1h-1z" fill="#808080"/></svg><div class="t11" style="left:77px;top:129px">C_Age_Group_0</div>
<div class="a" style="left:52px;top:152px;width:6px;height:1px;background:repeating-linear-gradient(90deg,#808080 0 1px,transparent 1px 2px)"></div><div class="a" style="left:42px;top:148px;width:7px;height:7px;border:1px solid #808080;background:#fff"></div><div class="a" style="left:44px;top:152px;width:5px;height:1px;background:#000"></div><div class="a" style="left:46px;top:150px;width:1px;height:5px;background:#000"></div><svg class="a" style="left:58px;top:146px" width="14" height="12" viewBox="0 0 14 12" shape-rendering="crispEdges"><path d="M0 0h1v1h-1zM1 0h1v1h-1zM2 0h1v1h-1zM3 0h1v1h-1zM4 0h1v1h-1zM5 0h1v1h-1zM6 0h1v1h-1zM7 0h1v1h-1zM8 0h1v1h-1zM9 0h1v1h-1zM10 0h1v1h-1zM11 0h1v1h-1zM12 0h1v1h-1zM13 0h1v1h-1zM0 1h1v1h-1zM13 1h1v1h-1zM0 2h1v1h-1zM13 2h1v1h-1zM0 3h1v1h-1zM13 3h1v1h-1zM0 4h1v1h-1zM13 4h1v1h-1zM0 5h1v1h-1zM13 5h1v1h-1zM0 6h1v1h-1zM13 6h1v1h-1zM0 7h1v1h-1zM13 7h1v1h-1zM0 8h1v1h-1zM13 8h1v1h-1zM0 9h1v1h-1zM13 9h1v1h-1zM0 10h1v1h-1zM13 10h1v1h-1zM0 11h1v1h-1zM1 11h1v1h-1zM2 11h1v1h-1zM3 11h1v1h-1zM4 11h1v1h-1zM5 11h1v1h-1zM6 11h1v1h-1zM7 11h1v1h-1zM8 11h1v1h-1zM9 11h1v1h-1zM10 11h1v1h-1zM11 11h1v1h-1zM12 11h1v1h-1zM13 11h1v1h-1z" fill="#000"/><path d="M1 1h1v1h-1zM2 1h1v1h-1zM3 1h1v1h-1zM4 1h1v1h-1zM5 1h1v1h-1zM6 1h1v1h-1zM7 1h1v1h-1zM8 1h1v1h-1zM9 1h1v1h-1zM10 1h1v1h-1zM11 1h1v1h-1zM12 1h1v1h-1zM1 2h1v1h-1zM2 2h1v1h-1zM3 2h1v1h-1zM4 2h1v1h-1zM5 2h1v1h-1zM6 2h1v1h-1zM7 2h1v1h-1zM8 2h1v1h-1zM9 2h1v1h-1zM10 2h1v1h-1zM11 2h1v1h-1zM12 2h1v1h-1zM1 3h1v1h-1zM2 3h1v1h-1zM3 3h1v1h-1zM4 3h1v1h-1zM5 3h1v1h-1zM6 3h1v1h-1zM7 3h1v1h-1zM8 3h1v1h-1zM9 3h1v1h-1zM10 3h1v1h-1zM11 3h1v1h-1zM12 3h1v1h-1z" fill="#008000"/><path d="M1 4h1v1h-1zM2 4h1v1h-1zM3 4h1v1h-1zM4 4h1v1h-1zM5 4h1v1h-1zM6 4h1v1h-1zM7 4h1v1h-1zM8 4h1v1h-1zM9 4h1v1h-1zM10 4h1v1h-1zM11 4h1v1h-1zM12 4h1v1h-1zM1 5h1v1h-1zM5 5h1v1h-1zM8 5h1v1h-1zM12 5h1v1h-1zM1 6h1v1h-1zM2 6h1v1h-1zM3 6h1v1h-1zM4 6h1v1h-1zM5 6h1v1h-1zM6 6h1v1h-1zM7 6h1v1h-1zM8 6h1v1h-1zM9 6h1v1h-1zM10 6h1v1h-1zM11 6h1v1h-1zM12 6h1v1h-1zM1 7h1v1h-1zM5 7h1v1h-1zM8 7h1v1h-1zM12 7h1v1h-1zM1 8h1v1h-1zM2 8h1v1h-1zM3 8h1v1h-1zM4 8h1v1h-1zM5 8h1v1h-1zM6 8h1v1h-1zM7 8h1v1h-1zM8 8h1v1h-1zM9 8h1v1h-1zM10 8h1v1h-1zM11 8h1v1h-1zM12 8h1v1h-1zM1 9h1v1h-1zM5 9h1v1h-1zM8 9h1v1h-1zM12 9h1v1h-1zM1 10h1v1h-1zM2 10h1v1h-1zM3 10h1v1h-1zM4 10h1v1h-1zM5 10h1v1h-1zM6 10h1v1h-1zM7 10h1v1h-1zM8 10h1v1h-1zM9 10h1v1h-1zM10 10h1v1h-1zM11 10h1v1h-1zM12 10h1v1h-1z" fill="#fff"/><path d="M2 5h1v1h-1zM3 5h1v1h-1zM4 5h1v1h-1zM6 5h1v1h-1zM7 5h1v1h-1zM9 5h1v1h-1zM10 5h1v1h-1zM11 5h1v1h-1zM2 7h1v1h-1zM3 7h1v1h-1zM4 7h1v1h-1zM6 7h1v1h-1zM7 7h1v1h-1zM9 7h1v1h-1zM10 7h1v1h-1zM11 7h1v1h-1zM2 9h1v1h-1zM3 9h1v1h-1zM4 9h1v1h-1zM6 9h1v1h-1zM7 9h1v1h-1zM9 9h1v1h-1zM10 9h1v1h-1zM11 9h1v1h-1z" fill="#808080"/></svg><div class="t11" style="left:77px;top:145px">C_Cal_Date_0</div>
<div class="a" style="left:52px;top:168px;width:6px;height:1px;background:repeating-linear-gradient(90deg,#808080 0 1px,transparent 1px 2px)"></div><div class="a" style="left:42px;top:164px;width:7px;height:7px;border:1px solid #808080;background:#fff"></div><div class="a" style="left:44px;top:168px;width:5px;height:1px;background:#000"></div><div class="a" style="left:46px;top:166px;width:1px;height:5px;background:#000"></div><svg class="a" style="left:58px;top:162px" width="14" height="12" viewBox="0 0 14 12" shape-rendering="crispEdges"><path d="M0 0h1v1h-1zM1 0h1v1h-1zM2 0h1v1h-1zM3 0h1v1h-1zM4 0h1v1h-1zM5 0h1v1h-1zM6 0h1v1h-1zM7 0h1v1h-1zM8 0h1v1h-1zM9 0h1v1h-1zM10 0h1v1h-1zM11 0h1v1h-1zM12 0h1v1h-1zM13 0h1v1h-1zM0 1h1v1h-1zM13 1h1v1h-1zM0 2h1v1h-1zM13 2h1v1h-1zM0 3h1v1h-1zM13 3h1v1h-1zM0 4h1v1h-1zM13 4h1v1h-1zM0 5h1v1h-1zM13 5h1v1h-1zM0 6h1v1h-1zM13 6h1v1h-1zM0 7h1v1h-1zM13 7h1v1h-1zM0 8h1v1h-1zM13 8h1v1h-1zM0 9h1v1h-1zM13 9h1v1h-1zM0 10h1v1h-1zM13 10h1v1h-1zM0 11h1v1h-1zM1 11h1v1h-1zM2 11h1v1h-1zM3 11h1v1h-1zM4 11h1v1h-1zM5 11h1v1h-1zM6 11h1v1h-1zM7 11h1v1h-1zM8 11h1v1h-1zM9 11h1v1h-1zM10 11h1v1h-1zM11 11h1v1h-1zM12 11h1v1h-1zM13 11h1v1h-1z" fill="#000"/><path d="M1 1h1v1h-1zM2 1h1v1h-1zM3 1h1v1h-1zM4 1h1v1h-1zM5 1h1v1h-1zM6 1h1v1h-1zM7 1h1v1h-1zM8 1h1v1h-1zM9 1h1v1h-1zM10 1h1v1h-1zM11 1h1v1h-1zM12 1h1v1h-1zM1 2h1v1h-1zM2 2h1v1h-1zM3 2h1v1h-1zM4 2h1v1h-1zM5 2h1v1h-1zM6 2h1v1h-1zM7 2h1v1h-1zM8 2h1v1h-1zM9 2h1v1h-1zM10 2h1v1h-1zM11 2h1v1h-1zM12 2h1v1h-1zM1 3h1v1h-1zM2 3h1v1h-1zM3 3h1v1h-1zM4 3h1v1h-1zM5 3h1v1h-1zM6 3h1v1h-1zM7 3h1v1h-1zM8 3h1v1h-1zM9 3h1v1h-1zM10 3h1v1h-1zM11 3h1v1h-1zM12 3h1v1h-1z" fill="#008000"/><path d="M1 4h1v1h-1zM2 4h1v1h-1zM3 4h1v1h-1zM4 4h1v1h-1zM5 4h1v1h-1zM6 4h1v1h-1zM7 4h1v1h-1zM8 4h1v1h-1zM9 4h1v1h-1zM10 4h1v1h-1zM11 4h1v1h-1zM12 4h1v1h-1zM1 5h1v1h-1zM5 5h1v1h-1zM8 5h1v1h-1zM12 5h1v1h-1zM1 6h1v1h-1zM2 6h1v1h-1zM3 6h1v1h-1zM4 6h1v1h-1zM5 6h1v1h-1zM6 6h1v1h-1zM7 6h1v1h-1zM8 6h1v1h-1zM9 6h1v1h-1zM10 6h1v1h-1zM11 6h1v1h-1zM12 6h1v1h-1zM1 7h1v1h-1zM5 7h1v1h-1zM8 7h1v1h-1zM12 7h1v1h-1zM1 8h1v1h-1zM2 8h1v1h-1zM3 8h1v1h-1zM4 8h1v1h-1zM5 8h1v1h-1zM6 8h1v1h-1zM7 8h1v1h-1zM8 8h1v1h-1zM9 8h1v1h-1zM10 8h1v1h-1zM11 8h1v1h-1zM12 8h1v1h-1zM1 9h1v1h-1zM5 9h1v1h-1zM8 9h1v1h-1zM12 9h1v1h-1zM1 10h1v1h-1zM2 10h1v1h-1zM3 10h1v1h-1zM4 10h1v1h-1zM5 10h1v1h-1zM6 10h1v1h-1zM7 10h1v1h-1zM8 10h1v1h-1zM9 10h1v1h-1zM10 10h1v1h-1zM11 10h1v1h-1zM12 10h1v1h-1z" fill="#fff"/><path d="M2 5h1v1h-1zM3 5h1v1h-1zM4 5h1v1h-1zM6 5h1v1h-1zM7 5h1v1h-1zM9 5h1v1h-1zM10 5h1v1h-1zM11 5h1v1h-1zM2 7h1v1h-1zM3 7h1v1h-1zM4 7h1v1h-1zM6 7h1v1h-1zM7 7h1v1h-1zM9 7h1v1h-1zM10 7h1v1h-1zM11 7h1v1h-1zM2 9h1v1h-1zM3 9h1v1h-1zM4 9h1v1h-1zM6 9h1v1h-1zM7 9h1v1h-1zM9 9h1v1h-1zM10 9h1v1h-1zM11 9h1v1h-1z" fill="#808080"/></svg><div class="t11" style="left:77px;top:161px">C_Cal_Date_1</div>
<div class="a" style="left:52px;top:184px;width:6px;height:1px;background:repeating-linear-gradient(90deg,#808080 0 1px,transparent 1px 2px)"></div><div class="a" style="left:42px;top:180px;width:7px;height:7px;border:1px solid #808080;background:#fff"></div><div class="a" style="left:44px;top:184px;width:5px;height:1px;background:#000"></div><div class="a" style="left:46px;top:182px;width:1px;height:5px;background:#000"></div><svg class="a" style="left:58px;top:178px" width="14" height="12" viewBox="0 0 14 12" shape-rendering="crispEdges"><path d="M0 0h1v1h-1zM1 0h1v1h-1zM2 0h1v1h-1zM3 0h1v1h-1zM4 0h1v1h-1zM5 0h1v1h-1zM6 0h1v1h-1zM7 0h1v1h-1zM8 0h1v1h-1zM9 0h1v1h-1zM10 0h1v1h-1zM11 0h1v1h-1zM12 0h1v1h-1zM13 0h1v1h-1zM0 1h1v1h-1zM13 1h1v1h-1zM0 2h1v1h-1zM13 2h1v1h-1zM0 3h1v1h-1zM13 3h1v1h-1zM0 4h1v1h-1zM13 4h1v1h-1zM0 5h1v1h-1zM13 5h1v1h-1zM0 6h1v1h-1zM13 6h1v1h-1zM0 7h1v1h-1zM13 7h1v1h-1zM0 8h1v1h-1zM13 8h1v1h-1zM0 9h1v1h-1zM13 9h1v1h-1zM0 10h1v1h-1zM13 10h1v1h-1zM0 11h1v1h-1zM1 11h1v1h-1zM2 11h1v1h-1zM3 11h1v1h-1zM4 11h1v1h-1zM5 11h1v1h-1zM6 11h1v1h-1zM7 11h1v1h-1zM8 11h1v1h-1zM9 11h1v1h-1zM10 11h1v1h-1zM11 11h1v1h-1zM12 11h1v1h-1zM13 11h1v1h-1z" fill="#000"/><path d="M1 1h1v1h-1zM2 1h1v1h-1zM3 1h1v1h-1zM4 1h1v1h-1zM5 1h1v1h-1zM6 1h1v1h-1zM7 1h1v1h-1zM8 1h1v1h-1zM9 1h1v1h-1zM10 1h1v1h-1zM11 1h1v1h-1zM12 1h1v1h-1zM1 2h1v1h-1zM2 2h1v1h-1zM3 2h1v1h-1zM4 2h1v1h-1zM5 2h1v1h-1zM6 2h1v1h-1zM7 2h1v1h-1zM8 2h1v1h-1zM9 2h1v1h-1zM10 2h1v1h-1zM11 2h1v1h-1zM12 2h1v1h-1zM1 3h1v1h-1zM2 3h1v1h-1zM3 3h1v1h-1zM4 3h1v1h-1zM5 3h1v1h-1zM6 3h1v1h-1zM7 3h1v1h-1zM8 3h1v1h-1zM9 3h1v1h-1zM10 3h1v1h-1zM11 3h1v1h-1zM12 3h1v1h-1z" fill="#008000"/><path d="M1 4h1v1h-1zM2 4h1v1h-1zM3 4h1v1h-1zM4 4h1v1h-1zM5 4h1v1h-1zM6 4h1v1h-1zM7 4h1v1h-1zM8 4h1v1h-1zM9 4h1v1h-1zM10 4h1v1h-1zM11 4h1v1h-1zM12 4h1v1h-1zM1 5h1v1h-1zM5 5h1v1h-1zM8 5h1v1h-1zM12 5h1v1h-1zM1 6h1v1h-1zM2 6h1v1h-1zM3 6h1v1h-1zM4 6h1v1h-1zM5 6h1v1h-1zM6 6h1v1h-1zM7 6h1v1h-1zM8 6h1v1h-1zM9 6h1v1h-1zM10 6h1v1h-1zM11 6h1v1h-1zM12 6h1v1h-1zM1 7h1v1h-1zM5 7h1v1h-1zM8 7h1v1h-1zM12 7h1v1h-1zM1 8h1v1h-1zM2 8h1v1h-1zM3 8h1v1h-1zM4 8h1v1h-1zM5 8h1v1h-1zM6 8h1v1h-1zM7 8h1v1h-1zM8 8h1v1h-1zM9 8h1v1h-1zM10 8h1v1h-1zM11 8h1v1h-1zM12 8h1v1h-1zM1 9h1v1h-1zM5 9h1v1h-1zM8 9h1v1h-1zM12 9h1v1h-1zM1 10h1v1h-1zM2 10h1v1h-1zM3 10h1v1h-1zM4 10h1v1h-1zM5 10h1v1h-1zM6 10h1v1h-1zM7 10h1v1h-1zM8 10h1v1h-1zM9 10h1v1h-1zM10 10h1v1h-1zM11 10h1v1h-1zM12 10h1v1h-1z" fill="#fff"/><path d="M2 5h1v1h-1zM3 5h1v1h-1zM4 5h1v1h-1zM6 5h1v1h-1zM7 5h1v1h-1zM9 5h1v1h-1zM10 5h1v1h-1zM11 5h1v1h-1zM2 7h1v1h-1zM3 7h1v1h-1zM4 7h1v1h-1zM6 7h1v1h-1zM7 7h1v1h-1zM9 7h1v1h-1zM10 7h1v1h-1zM11 7h1v1h-1zM2 9h1v1h-1zM3 9h1v1h-1zM4 9h1v1h-1zM6 9h1v1h-1zM7 9h1v1h-1zM9 9h1v1h-1zM10 9h1v1h-1zM11 9h1v1h-1z" fill="#808080"/></svg><div class="t11" style="left:77px;top:177px">C_Cal_Date_2</div>
<div class="a" style="left:52px;top:200px;width:6px;height:1px;background:repeating-linear-gradient(90deg,#808080 0 1px,transparent 1px 2px)"></div><div class="a" style="left:42px;top:196px;width:7px;height:7px;border:1px solid #808080;background:#fff"></div><div class="a" style="left:44px;top:200px;width:5px;height:1px;background:#000"></div><div class="a" style="left:46px;top:198px;width:1px;height:5px;background:#000"></div><svg class="a" style="left:58px;top:194px" width="14" height="12" viewBox="0 0 14 12" shape-rendering="crispEdges"><path d="M0 0h1v1h-1zM1 0h1v1h-1zM2 0h1v1h-1zM3 0h1v1h-1zM4 0h1v1h-1zM5 0h1v1h-1zM6 0h1v1h-1zM7 0h1v1h-1zM8 0h1v1h-1zM9 0h1v1h-1zM10 0h1v1h-1zM11 0h1v1h-1zM12 0h1v1h-1zM13 0h1v1h-1zM0 1h1v1h-1zM13 1h1v1h-1zM0 2h1v1h-1zM13 2h1v1h-1zM0 3h1v1h-1zM13 3h1v1h-1zM0 4h1v1h-1zM13 4h1v1h-1zM0 5h1v1h-1zM13 5h1v1h-1zM0 6h1v1h-1zM13 6h1v1h-1zM0 7h1v1h-1zM13 7h1v1h-1zM0 8h1v1h-1zM13 8h1v1h-1zM0 9h1v1h-1zM13 9h1v1h-1zM0 10h1v1h-1zM13 10h1v1h-1zM0 11h1v1h-1zM1 11h1v1h-1zM2 11h1v1h-1zM3 11h1v1h-1zM4 11h1v1h-1zM5 11h1v1h-1zM6 11h1v1h-1zM7 11h1v1h-1zM8 11h1v1h-1zM9 11h1v1h-1zM10 11h1v1h-1zM11 11h1v1h-1zM12 11h1v1h-1zM13 11h1v1h-1z" fill="#000"/><path d="M1 1h1v1h-1zM2 1h1v1h-1zM3 1h1v1h-1zM4 1h1v1h-1zM5 1h1v1h-1zM6 1h1v1h-1zM7 1h1v1h-1zM8 1h1v1h-1zM9 1h1v1h-1zM10 1h1v1h-1zM11 1h1v1h-1zM12 1h1v1h-1zM1 2h1v1h-1zM2 2h1v1h-1zM3 2h1v1h-1zM4 2h1v1h-1zM5 2h1v1h-1zM6 2h1v1h-1zM7 2h1v1h-1zM8 2h1v1h-1zM9 2h1v1h-1zM10 2h1v1h-1zM11 2h1v1h-1zM12 2h1v1h-1zM1 3h1v1h-1zM2 3h1v1h-1zM3 3h1v1h-1zM4 3h1v1h-1zM5 3h1v1h-1zM6 3h1v1h-1zM7 3h1v1h-1zM8 3h1v1h-1zM9 3h1v1h-1zM10 3h1v1h-1zM11 3h1v1h-1zM12 3h1v1h-1z" fill="#008000"/><path d="M1 4h1v1h-1zM2 4h1v1h-1zM3 4h1v1h-1zM4 4h1v1h-1zM5 4h1v1h-1zM6 4h1v1h-1zM7 4h1v1h-1zM8 4h1v1h-1zM9 4h1v1h-1zM10 4h1v1h-1zM11 4h1v1h-1zM12 4h1v1h-1zM1 5h1v1h-1zM5 5h1v1h-1zM8 5h1v1h-1zM12 5h1v1h-1zM1 6h1v1h-1zM2 6h1v1h-1zM3 6h1v1h-1zM4 6h1v1h-1zM5 6h1v1h-1zM6 6h1v1h-1zM7 6h1v1h-1zM8 6h1v1h-1zM9 6h1v1h-1zM10 6h1v1h-1zM11 6h1v1h-1zM12 6h1v1h-1zM1 7h1v1h-1zM5 7h1v1h-1zM8 7h1v1h-1zM12 7h1v1h-1zM1 8h1v1h-1zM2 8h1v1h-1zM3 8h1v1h-1zM4 8h1v1h-1zM5 8h1v1h-1zM6 8h1v1h-1zM7 8h1v1h-1zM8 8h1v1h-1zM9 8h1v1h-1zM10 8h1v1h-1zM11 8h1v1h-1zM12 8h1v1h-1zM1 9h1v1h-1zM5 9h1v1h-1zM8 9h1v1h-1zM12 9h1v1h-1zM1 10h1v1h-1zM2 10h1v1h-1zM3 10h1v1h-1zM4 10h1v1h-1zM5 10h1v1h-1zM6 10h1v1h-1zM7 10h1v1h-1zM8 10h1v1h-1zM9 10h1v1h-1zM10 10h1v1h-1zM11 10h1v1h-1zM12 10h1v1h-1z" fill="#fff"/><path d="M2 5h1v1h-1zM3 5h1v1h-1zM4 5h1v1h-1zM6 5h1v1h-1zM7 5h1v1h-1zM9 5h1v1h-1zM10 5h1v1h-1zM11 5h1v1h-1zM2 7h1v1h-1zM3 7h1v1h-1zM4 7h1v1h-1zM6 7h1v1h-1zM7 7h1v1h-1zM9 7h1v1h-1zM10 7h1v1h-1zM11 7h1v1h-1zM2 9h1v1h-1zM3 9h1v1h-1zM4 9h1v1h-1zM6 9h1v1h-1zM7 9h1v1h-1zM9 9h1v1h-1zM10 9h1v1h-1zM11 9h1v1h-1z" fill="#808080"/></svg><div class="t11" style="left:77px;top:193px">C_Cal_Last_Tran_Date_0</div>
<div class="a" style="left:52px;top:216px;width:6px;height:1px;background:repeating-linear-gradient(90deg,#808080 0 1px,transparent 1px 2px)"></div><div class="a" style="left:42px;top:212px;width:7px;height:7px;border:1px solid #808080;background:#fff"></div><div class="a" style="left:44px;top:216px;width:5px;height:1px;background:#000"></div><div class="a" style="left:46px;top:214px;width:1px;height:5px;background:#000"></div><svg class="a" style="left:58px;top:210px" width="14" height="12" viewBox="0 0 14 12" shape-rendering="crispEdges"><path d="M0 0h1v1h-1zM1 0h1v1h-1zM2 0h1v1h-1zM3 0h1v1h-1zM4 0h1v1h-1zM5 0h1v1h-1zM6 0h1v1h-1zM7 0h1v1h-1zM8 0h1v1h-1zM9 0h1v1h-1zM10 0h1v1h-1zM11 0h1v1h-1zM12 0h1v1h-1zM13 0h1v1h-1zM0 1h1v1h-1zM13 1h1v1h-1zM0 2h1v1h-1zM13 2h1v1h-1zM0 3h1v1h-1zM13 3h1v1h-1zM0 4h1v1h-1zM13 4h1v1h-1zM0 5h1v1h-1zM13 5h1v1h-1zM0 6h1v1h-1zM13 6h1v1h-1zM0 7h1v1h-1zM13 7h1v1h-1zM0 8h1v1h-1zM13 8h1v1h-1zM0 9h1v1h-1zM13 9h1v1h-1zM0 10h1v1h-1zM13 10h1v1h-1zM0 11h1v1h-1zM1 11h1v1h-1zM2 11h1v1h-1zM3 11h1v1h-1zM4 11h1v1h-1zM5 11h1v1h-1zM6 11h1v1h-1zM7 11h1v1h-1zM8 11h1v1h-1zM9 11h1v1h-1zM10 11h1v1h-1zM11 11h1v1h-1zM12 11h1v1h-1zM13 11h1v1h-1z" fill="#000"/><path d="M1 1h1v1h-1zM2 1h1v1h-1zM3 1h1v1h-1zM4 1h1v1h-1zM5 1h1v1h-1zM6 1h1v1h-1zM7 1h1v1h-1zM8 1h1v1h-1zM9 1h1v1h-1zM10 1h1v1h-1zM11 1h1v1h-1zM12 1h1v1h-1zM1 2h1v1h-1zM2 2h1v1h-1zM3 2h1v1h-1zM4 2h1v1h-1zM5 2h1v1h-1zM6 2h1v1h-1zM7 2h1v1h-1zM8 2h1v1h-1zM9 2h1v1h-1zM10 2h1v1h-1zM11 2h1v1h-1zM12 2h1v1h-1zM1 3h1v1h-1zM2 3h1v1h-1zM3 3h1v1h-1zM4 3h1v1h-1zM5 3h1v1h-1zM6 3h1v1h-1zM7 3h1v1h-1zM8 3h1v1h-1zM9 3h1v1h-1zM10 3h1v1h-1zM11 3h1v1h-1zM12 3h1v1h-1z" fill="#008000"/><path d="M1 4h1v1h-1zM2 4h1v1h-1zM3 4h1v1h-1zM4 4h1v1h-1zM5 4h1v1h-1zM6 4h1v1h-1zM7 4h1v1h-1zM8 4h1v1h-1zM9 4h1v1h-1zM10 4h1v1h-1zM11 4h1v1h-1zM12 4h1v1h-1zM1 5h1v1h-1zM5 5h1v1h-1zM8 5h1v1h-1zM12 5h1v1h-1zM1 6h1v1h-1zM2 6h1v1h-1zM3 6h1v1h-1zM4 6h1v1h-1zM5 6h1v1h-1zM6 6h1v1h-1zM7 6h1v1h-1zM8 6h1v1h-1zM9 6h1v1h-1zM10 6h1v1h-1zM11 6h1v1h-1zM12 6h1v1h-1zM1 7h1v1h-1zM5 7h1v1h-1zM8 7h1v1h-1zM12 7h1v1h-1zM1 8h1v1h-1zM2 8h1v1h-1zM3 8h1v1h-1zM4 8h1v1h-1zM5 8h1v1h-1zM6 8h1v1h-1zM7 8h1v1h-1zM8 8h1v1h-1zM9 8h1v1h-1zM10 8h1v1h-1zM11 8h1v1h-1zM12 8h1v1h-1zM1 9h1v1h-1zM5 9h1v1h-1zM8 9h1v1h-1zM12 9h1v1h-1zM1 10h1v1h-1zM2 10h1v1h-1zM3 10h1v1h-1zM4 10h1v1h-1zM5 10h1v1h-1zM6 10h1v1h-1zM7 10h1v1h-1zM8 10h1v1h-1zM9 10h1v1h-1zM10 10h1v1h-1zM11 10h1v1h-1zM12 10h1v1h-1z" fill="#fff"/><path d="M2 5h1v1h-1zM3 5h1v1h-1zM4 5h1v1h-1zM6 5h1v1h-1zM7 5h1v1h-1zM9 5h1v1h-1zM10 5h1v1h-1zM11 5h1v1h-1zM2 7h1v1h-1zM3 7h1v1h-1zM4 7h1v1h-1zM6 7h1v1h-1zM7 7h1v1h-1zM9 7h1v1h-1zM10 7h1v1h-1zM11 7h1v1h-1zM2 9h1v1h-1zM3 9h1v1h-1zM4 9h1v1h-1zM6 9h1v1h-1zM7 9h1v1h-1zM9 9h1v1h-1zM10 9h1v1h-1zM11 9h1v1h-1z" fill="#808080"/></svg><div class="t11" style="left:77px;top:209px">C_Cal_Last_Tran_Date_1</div>
<div class="a" style="left:52px;top:232px;width:6px;height:1px;background:repeating-linear-gradient(90deg,#808080 0 1px,transparent 1px 2px)"></div><div class="a" style="left:42px;top:228px;width:7px;height:7px;border:1px solid #808080;background:#fff"></div><div class="a" style="left:44px;top:232px;width:5px;height:1px;background:#000"></div><div class="a" style="left:46px;top:230px;width:1px;height:5px;background:#000"></div><svg class="a" style="left:58px;top:226px" width="14" height="12" viewBox="0 0 14 12" shape-rendering="crispEdges"><path d="M0 0h1v1h-1zM1 0h1v1h-1zM2 0h1v1h-1zM3 0h1v1h-1zM4 0h1v1h-1zM5 0h1v1h-1zM6 0h1v1h-1zM7 0h1v1h-1zM8 0h1v1h-1zM9 0h1v1h-1zM10 0h1v1h-1zM11 0h1v1h-1zM12 0h1v1h-1zM13 0h1v1h-1zM0 1h1v1h-1zM13 1h1v1h-1zM0 2h1v1h-1zM13 2h1v1h-1zM0 3h1v1h-1zM13 3h1v1h-1zM0 4h1v1h-1zM13 4h1v1h-1zM0 5h1v1h-1zM13 5h1v1h-1zM0 6h1v1h-1zM13 6h1v1h-1zM0 7h1v1h-1zM13 7h1v1h-1zM0 8h1v1h-1zM13 8h1v1h-1zM0 9h1v1h-1zM13 9h1v1h-1zM0 10h1v1h-1zM13 10h1v1h-1zM0 11h1v1h-1zM1 11h1v1h-1zM2 11h1v1h-1zM3 11h1v1h-1zM4 11h1v1h-1zM5 11h1v1h-1zM6 11h1v1h-1zM7 11h1v1h-1zM8 11h1v1h-1zM9 11h1v1h-1zM10 11h1v1h-1zM11 11h1v1h-1zM12 11h1v1h-1zM13 11h1v1h-1z" fill="#000"/><path d="M1 1h1v1h-1zM2 1h1v1h-1zM3 1h1v1h-1zM4 1h1v1h-1zM5 1h1v1h-1zM6 1h1v1h-1zM7 1h1v1h-1zM8 1h1v1h-1zM9 1h1v1h-1zM10 1h1v1h-1zM11 1h1v1h-1zM12 1h1v1h-1zM1 2h1v1h-1zM2 2h1v1h-1zM3 2h1v1h-1zM4 2h1v1h-1zM5 2h1v1h-1zM6 2h1v1h-1zM7 2h1v1h-1zM8 2h1v1h-1zM9 2h1v1h-1zM10 2h1v1h-1zM11 2h1v1h-1zM12 2h1v1h-1zM1 3h1v1h-1zM2 3h1v1h-1zM3 3h1v1h-1zM4 3h1v1h-1zM5 3h1v1h-1zM6 3h1v1h-1zM7 3h1v1h-1zM8 3h1v1h-1zM9 3h1v1h-1zM10 3h1v1h-1zM11 3h1v1h-1zM12 3h1v1h-1z" fill="#008000"/><path d="M1 4h1v1h-1zM2 4h1v1h-1zM3 4h1v1h-1zM4 4h1v1h-1zM5 4h1v1h-1zM6 4h1v1h-1zM7 4h1v1h-1zM8 4h1v1h-1zM9 4h1v1h-1zM10 4h1v1h-1zM11 4h1v1h-1zM12 4h1v1h-1zM1 5h1v1h-1zM5 5h1v1h-1zM8 5h1v1h-1zM12 5h1v1h-1zM1 6h1v1h-1zM2 6h1v1h-1zM3 6h1v1h-1zM4 6h1v1h-1zM5 6h1v1h-1zM6 6h1v1h-1zM7 6h1v1h-1zM8 6h1v1h-1zM9 6h1v1h-1zM10 6h1v1h-1zM11 6h1v1h-1zM12 6h1v1h-1zM1 7h1v1h-1zM5 7h1v1h-1zM8 7h1v1h-1zM12 7h1v1h-1zM1 8h1v1h-1zM2 8h1v1h-1zM3 8h1v1h-1zM4 8h1v1h-1zM5 8h1v1h-1zM6 8h1v1h-1zM7 8h1v1h-1zM8 8h1v1h-1zM9 8h1v1h-1zM10 8h1v1h-1zM11 8h1v1h-1zM12 8h1v1h-1zM1 9h1v1h-1zM5 9h1v1h-1zM8 9h1v1h-1zM12 9h1v1h-1zM1 10h1v1h-1zM2 10h1v1h-1zM3 10h1v1h-1zM4 10h1v1h-1zM5 10h1v1h-1zM6 10h1v1h-1zM7 10h1v1h-1zM8 10h1v1h-1zM9 10h1v1h-1zM10 10h1v1h-1zM11 10h1v1h-1zM12 10h1v1h-1z" fill="#fff"/><path d="M2 5h1v1h-1zM3 5h1v1h-1zM4 5h1v1h-1zM6 5h1v1h-1zM7 5h1v1h-1zM9 5h1v1h-1zM10 5h1v1h-1zM11 5h1v1h-1zM2 7h1v1h-1zM3 7h1v1h-1zM4 7h1v1h-1zM6 7h1v1h-1zM7 7h1v1h-1zM9 7h1v1h-1zM10 7h1v1h-1zM11 7h1v1h-1zM2 9h1v1h-1zM3 9h1v1h-1zM4 9h1v1h-1zM6 9h1v1h-1zM7 9h1v1h-1zM9 9h1v1h-1zM10 9h1v1h-1zM11 9h1v1h-1z" fill="#808080"/></svg><div class="t11" style="left:77px;top:225px">C_Cal_Last_Tran_Date_2</div>
<div class="a" style="left:52px;top:248px;width:6px;height:1px;background:repeating-linear-gradient(90deg,#808080 0 1px,transparent 1px 2px)"></div><div class="a" style="left:42px;top:244px;width:7px;height:7px;border:1px solid #808080;background:#fff"></div><div class="a" style="left:44px;top:248px;width:5px;height:1px;background:#000"></div><div class="a" style="left:46px;top:246px;width:1px;height:5px;background:#000"></div><svg class="a" style="left:58px;top:242px" width="14" height="12" viewBox="0 0 14 12" shape-rendering="crispEdges"><path d="M0 0h1v1h-1zM1 0h1v1h-1zM2 0h1v1h-1zM3 0h1v1h-1zM4 0h1v1h-1zM5 0h1v1h-1zM6 0h1v1h-1zM7 0h1v1h-1zM8 0h1v1h-1zM9 0h1v1h-1zM10 0h1v1h-1zM11 0h1v1h-1zM12 0h1v1h-1zM13 0h1v1h-1zM0 1h1v1h-1zM13 1h1v1h-1zM0 2h1v1h-1zM13 2h1v1h-1zM0 3h1v1h-1zM13 3h1v1h-1zM0 4h1v1h-1zM13 4h1v1h-1zM0 5h1v1h-1zM13 5h1v1h-1zM0 6h1v1h-1zM13 6h1v1h-1zM0 7h1v1h-1zM13 7h1v1h-1zM0 8h1v1h-1zM13 8h1v1h-1zM0 9h1v1h-1zM13 9h1v1h-1zM0 10h1v1h-1zM13 10h1v1h-1zM0 11h1v1h-1zM1 11h1v1h-1zM2 11h1v1h-1zM3 11h1v1h-1zM4 11h1v1h-1zM5 11h1v1h-1zM6 11h1v1h-1zM7 11h1v1h-1zM8 11h1v1h-1zM9 11h1v1h-1zM10 11h1v1h-1zM11 11h1v1h-1zM12 11h1v1h-1zM13 11h1v1h-1z" fill="#000"/><path d="M1 1h1v1h-1zM2 1h1v1h-1zM3 1h1v1h-1zM4 1h1v1h-1zM5 1h1v1h-1zM6 1h1v1h-1zM7 1h1v1h-1zM8 1h1v1h-1zM9 1h1v1h-1zM10 1h1v1h-1zM11 1h1v1h-1zM12 1h1v1h-1zM1 2h1v1h-1zM2 2h1v1h-1zM3 2h1v1h-1zM4 2h1v1h-1zM5 2h1v1h-1zM6 2h1v1h-1zM7 2h1v1h-1zM8 2h1v1h-1zM9 2h1v1h-1zM10 2h1v1h-1zM11 2h1v1h-1zM12 2h1v1h-1zM1 3h1v1h-1zM2 3h1v1h-1zM3 3h1v1h-1zM4 3h1v1h-1zM5 3h1v1h-1zM6 3h1v1h-1zM7 3h1v1h-1zM8 3h1v1h-1zM9 3h1v1h-1zM10 3h1v1h-1zM11 3h1v1h-1zM12 3h1v1h-1z" fill="#008000"/><path d="M1 4h1v1h-1zM2 4h1v1h-1zM3 4h1v1h-1zM4 4h1v1h-1zM5 4h1v1h-1zM6 4h1v1h-1zM7 4h1v1h-1zM8 4h1v1h-1zM9 4h1v1h-1zM10 4h1v1h-1zM11 4h1v1h-1zM12 4h1v1h-1zM1 5h1v1h-1zM5 5h1v1h-1zM8 5h1v1h-1zM12 5h1v1h-1zM1 6h1v1h-1zM2 6h1v1h-1zM3 6h1v1h-1zM4 6h1v1h-1zM5 6h1v1h-1zM6 6h1v1h-1zM7 6h1v1h-1zM8 6h1v1h-1zM9 6h1v1h-1zM10 6h1v1h-1zM11 6h1v1h-1zM12 6h1v1h-1zM1 7h1v1h-1zM5 7h1v1h-1zM8 7h1v1h-1zM12 7h1v1h-1zM1 8h1v1h-1zM2 8h1v1h-1zM3 8h1v1h-1zM4 8h1v1h-1zM5 8h1v1h-1zM6 8h1v1h-1zM7 8h1v1h-1zM8 8h1v1h-1zM9 8h1v1h-1zM10 8h1v1h-1zM11 8h1v1h-1zM12 8h1v1h-1zM1 9h1v1h-1zM5 9h1v1h-1zM8 9h1v1h-1zM12 9h1v1h-1zM1 10h1v1h-1zM2 10h1v1h-1zM3 10h1v1h-1zM4 10h1v1h-1zM5 10h1v1h-1zM6 10h1v1h-1zM7 10h1v1h-1zM8 10h1v1h-1zM9 10h1v1h-1zM10 10h1v1h-1zM11 10h1v1h-1zM12 10h1v1h-1z" fill="#fff"/><path d="M2 5h1v1h-1zM3 5h1v1h-1zM4 5h1v1h-1zM6 5h1v1h-1zM7 5h1v1h-1zM9 5h1v1h-1zM10 5h1v1h-1zM11 5h1v1h-1zM2 7h1v1h-1zM3 7h1v1h-1zM4 7h1v1h-1zM6 7h1v1h-1zM7 7h1v1h-1zM9 7h1v1h-1zM10 7h1v1h-1zM11 7h1v1h-1zM2 9h1v1h-1zM3 9h1v1h-1zM4 9h1v1h-1zM6 9h1v1h-1zM7 9h1v1h-1zM9 9h1v1h-1zM10 9h1v1h-1zM11 9h1v1h-1z" fill="#808080"/></svg><div class="t11" style="left:77px;top:241px">C_Cal_Last_Tran_Year</div>
<div class="a" style="left:52px;top:264px;width:6px;height:1px;background:repeating-linear-gradient(90deg,#808080 0 1px,transparent 1px 2px)"></div><div class="a" style="left:42px;top:260px;width:7px;height:7px;border:1px solid #808080;background:#fff"></div><div class="a" style="left:44px;top:264px;width:5px;height:1px;background:#000"></div><div class="a" style="left:46px;top:262px;width:1px;height:5px;background:#000"></div><svg class="a" style="left:58px;top:258px" width="14" height="12" viewBox="0 0 14 12" shape-rendering="crispEdges"><path d="M0 0h1v1h-1zM1 0h1v1h-1zM2 0h1v1h-1zM3 0h1v1h-1zM4 0h1v1h-1zM5 0h1v1h-1zM6 0h1v1h-1zM7 0h1v1h-1zM8 0h1v1h-1zM9 0h1v1h-1zM10 0h1v1h-1zM11 0h1v1h-1zM12 0h1v1h-1zM13 0h1v1h-1zM0 1h1v1h-1zM13 1h1v1h-1zM0 2h1v1h-1zM13 2h1v1h-1zM0 3h1v1h-1zM13 3h1v1h-1zM0 4h1v1h-1zM13 4h1v1h-1zM0 5h1v1h-1zM13 5h1v1h-1zM0 6h1v1h-1zM13 6h1v1h-1zM0 7h1v1h-1zM13 7h1v1h-1zM0 8h1v1h-1zM13 8h1v1h-1zM0 9h1v1h-1zM13 9h1v1h-1zM0 10h1v1h-1zM13 10h1v1h-1zM0 11h1v1h-1zM1 11h1v1h-1zM2 11h1v1h-1zM3 11h1v1h-1zM4 11h1v1h-1zM5 11h1v1h-1zM6 11h1v1h-1zM7 11h1v1h-1zM8 11h1v1h-1zM9 11h1v1h-1zM10 11h1v1h-1zM11 11h1v1h-1zM12 11h1v1h-1zM13 11h1v1h-1z" fill="#000"/><path d="M1 1h1v1h-1zM2 1h1v1h-1zM3 1h1v1h-1zM4 1h1v1h-1zM5 1h1v1h-1zM6 1h1v1h-1zM7 1h1v1h-1zM8 1h1v1h-1zM9 1h1v1h-1zM10 1h1v1h-1zM11 1h1v1h-1zM12 1h1v1h-1zM1 2h1v1h-1zM2 2h1v1h-1zM3 2h1v1h-1zM4 2h1v1h-1zM5 2h1v1h-1zM6 2h1v1h-1zM7 2h1v1h-1zM8 2h1v1h-1zM9 2h1v1h-1zM10 2h1v1h-1zM11 2h1v1h-1zM12 2h1v1h-1zM1 3h1v1h-1zM2 3h1v1h-1zM3 3h1v1h-1zM4 3h1v1h-1zM5 3h1v1h-1zM6 3h1v1h-1zM7 3h1v1h-1zM8 3h1v1h-1zM9 3h1v1h-1zM10 3h1v1h-1zM11 3h1v1h-1zM12 3h1v1h-1z" fill="#008000"/><path d="M1 4h1v1h-1zM2 4h1v1h-1zM3 4h1v1h-1zM4 4h1v1h-1zM5 4h1v1h-1zM6 4h1v1h-1zM7 4h1v1h-1zM8 4h1v1h-1zM9 4h1v1h-1zM10 4h1v1h-1zM11 4h1v1h-1zM12 4h1v1h-1zM1 5h1v1h-1zM5 5h1v1h-1zM8 5h1v1h-1zM12 5h1v1h-1zM1 6h1v1h-1zM2 6h1v1h-1zM3 6h1v1h-1zM4 6h1v1h-1zM5 6h1v1h-1zM6 6h1v1h-1zM7 6h1v1h-1zM8 6h1v1h-1zM9 6h1v1h-1zM10 6h1v1h-1zM11 6h1v1h-1zM12 6h1v1h-1zM1 7h1v1h-1zM5 7h1v1h-1zM8 7h1v1h-1zM12 7h1v1h-1zM1 8h1v1h-1zM2 8h1v1h-1zM3 8h1v1h-1zM4 8h1v1h-1zM5 8h1v1h-1zM6 8h1v1h-1zM7 8h1v1h-1zM8 8h1v1h-1zM9 8h1v1h-1zM10 8h1v1h-1zM11 8h1v1h-1zM12 8h1v1h-1zM1 9h1v1h-1zM5 9h1v1h-1zM8 9h1v1h-1zM12 9h1v1h-1zM1 10h1v1h-1zM2 10h1v1h-1zM3 10h1v1h-1zM4 10h1v1h-1zM5 10h1v1h-1zM6 10h1v1h-1zM7 10h1v1h-1zM8 10h1v1h-1zM9 10h1v1h-1zM10 10h1v1h-1zM11 10h1v1h-1zM12 10h1v1h-1z" fill="#fff"/><path d="M2 5h1v1h-1zM3 5h1v1h-1zM4 5h1v1h-1zM6 5h1v1h-1zM7 5h1v1h-1zM9 5h1v1h-1zM10 5h1v1h-1zM11 5h1v1h-1zM2 7h1v1h-1zM3 7h1v1h-1zM4 7h1v1h-1zM6 7h1v1h-1zM7 7h1v1h-1zM9 7h1v1h-1zM10 7h1v1h-1zM11 7h1v1h-1zM2 9h1v1h-1zM3 9h1v1h-1zM4 9h1v1h-1zM6 9h1v1h-1zM7 9h1v1h-1zM9 9h1v1h-1zM10 9h1v1h-1zM11 9h1v1h-1z" fill="#808080"/></svg><div class="t11" style="left:77px;top:257px">C_Cal_Year</div>
<div class="a" style="left:52px;top:280px;width:6px;height:1px;background:repeating-linear-gradient(90deg,#808080 0 1px,transparent 1px 2px)"></div><div class="a" style="left:42px;top:276px;width:7px;height:7px;border:1px solid #808080;background:#fff"></div><div class="a" style="left:44px;top:280px;width:5px;height:1px;background:#000"></div><div class="a" style="left:46px;top:278px;width:1px;height:5px;background:#000"></div><svg class="a" style="left:58px;top:274px" width="14" height="12" viewBox="0 0 14 12" shape-rendering="crispEdges"><path d="M0 0h1v1h-1zM1 0h1v1h-1zM2 0h1v1h-1zM3 0h1v1h-1zM4 0h1v1h-1zM5 0h1v1h-1zM6 0h1v1h-1zM7 0h1v1h-1zM8 0h1v1h-1zM9 0h1v1h-1zM10 0h1v1h-1zM11 0h1v1h-1zM12 0h1v1h-1zM13 0h1v1h-1zM0 1h1v1h-1zM13 1h1v1h-1zM0 2h1v1h-1zM13 2h1v1h-1zM0 3h1v1h-1zM13 3h1v1h-1zM0 4h1v1h-1zM13 4h1v1h-1zM0 5h1v1h-1zM13 5h1v1h-1zM0 6h1v1h-1zM13 6h1v1h-1zM0 7h1v1h-1zM13 7h1v1h-1zM0 8h1v1h-1zM13 8h1v1h-1zM0 9h1v1h-1zM13 9h1v1h-1zM0 10h1v1h-1zM13 10h1v1h-1zM0 11h1v1h-1zM1 11h1v1h-1zM2 11h1v1h-1zM3 11h1v1h-1zM4 11h1v1h-1zM5 11h1v1h-1zM6 11h1v1h-1zM7 11h1v1h-1zM8 11h1v1h-1zM9 11h1v1h-1zM10 11h1v1h-1zM11 11h1v1h-1zM12 11h1v1h-1zM13 11h1v1h-1z" fill="#000"/><path d="M1 1h1v1h-1zM2 1h1v1h-1zM3 1h1v1h-1zM4 1h1v1h-1zM5 1h1v1h-1zM6 1h1v1h-1zM7 1h1v1h-1zM8 1h1v1h-1zM9 1h1v1h-1zM10 1h1v1h-1zM11 1h1v1h-1zM12 1h1v1h-1zM1 2h1v1h-1zM2 2h1v1h-1zM3 2h1v1h-1zM4 2h1v1h-1zM5 2h1v1h-1zM6 2h1v1h-1zM7 2h1v1h-1zM8 2h1v1h-1zM9 2h1v1h-1zM10 2h1v1h-1zM11 2h1v1h-1zM12 2h1v1h-1zM1 3h1v1h-1zM2 3h1v1h-1zM3 3h1v1h-1zM4 3h1v1h-1zM5 3h1v1h-1zM6 3h1v1h-1zM7 3h1v1h-1zM8 3h1v1h-1zM9 3h1v1h-1zM10 3h1v1h-1zM11 3h1v1h-1zM12 3h1v1h-1z" fill="#008000"/><path d="M1 4h1v1h-1zM2 4h1v1h-1zM3 4h1v1h-1zM4 4h1v1h-1zM5 4h1v1h-1zM6 4h1v1h-1zM7 4h1v1h-1zM8 4h1v1h-1zM9 4h1v1h-1zM10 4h1v1h-1zM11 4h1v1h-1zM12 4h1v1h-1zM1 5h1v1h-1zM5 5h1v1h-1zM8 5h1v1h-1zM12 5h1v1h-1zM1 6h1v1h-1zM2 6h1v1h-1zM3 6h1v1h-1zM4 6h1v1h-1zM5 6h1v1h-1zM6 6h1v1h-1zM7 6h1v1h-1zM8 6h1v1h-1zM9 6h1v1h-1zM10 6h1v1h-1zM11 6h1v1h-1zM12 6h1v1h-1zM1 7h1v1h-1zM5 7h1v1h-1zM8 7h1v1h-1zM12 7h1v1h-1zM1 8h1v1h-1zM2 8h1v1h-1zM3 8h1v1h-1zM4 8h1v1h-1zM5 8h1v1h-1zM6 8h1v1h-1zM7 8h1v1h-1zM8 8h1v1h-1zM9 8h1v1h-1zM10 8h1v1h-1zM11 8h1v1h-1zM12 8h1v1h-1zM1 9h1v1h-1zM5 9h1v1h-1zM8 9h1v1h-1zM12 9h1v1h-1zM1 10h1v1h-1zM2 10h1v1h-1zM3 10h1v1h-1zM4 10h1v1h-1zM5 10h1v1h-1zM6 10h1v1h-1zM7 10h1v1h-1zM8 10h1v1h-1zM9 10h1v1h-1zM10 10h1v1h-1zM11 10h1v1h-1zM12 10h1v1h-1z" fill="#fff"/><path d="M2 5h1v1h-1zM3 5h1v1h-1zM4 5h1v1h-1zM6 5h1v1h-1zM7 5h1v1h-1zM9 5h1v1h-1zM10 5h1v1h-1zM11 5h1v1h-1zM2 7h1v1h-1zM3 7h1v1h-1zM4 7h1v1h-1zM6 7h1v1h-1zM7 7h1v1h-1zM9 7h1v1h-1zM10 7h1v1h-1zM11 7h1v1h-1zM2 9h1v1h-1zM3 9h1v1h-1zM4 9h1v1h-1zM6 9h1v1h-1zM7 9h1v1h-1zM9 9h1v1h-1zM10 9h1v1h-1zM11 9h1v1h-1z" fill="#808080"/></svg><div class="t11" style="left:77px;top:273px">C_Cust_Mail_Indicator</div>
<div class="a" style="left:52px;top:296px;width:6px;height:1px;background:repeating-linear-gradient(90deg,#808080 0 1px,transparent 1px 2px)"></div><div class="a" style="left:42px;top:292px;width:7px;height:7px;border:1px solid #808080;background:#fff"></div><div class="a" style="left:44px;top:296px;width:5px;height:1px;background:#000"></div><div class="a" style="left:46px;top:294px;width:1px;height:5px;background:#000"></div><svg class="a" style="left:58px;top:290px" width="14" height="12" viewBox="0 0 14 12" shape-rendering="crispEdges"><path d="M0 0h1v1h-1zM1 0h1v1h-1zM2 0h1v1h-1zM3 0h1v1h-1zM4 0h1v1h-1zM5 0h1v1h-1zM6 0h1v1h-1zM7 0h1v1h-1zM8 0h1v1h-1zM9 0h1v1h-1zM10 0h1v1h-1zM11 0h1v1h-1zM12 0h1v1h-1zM13 0h1v1h-1zM0 1h1v1h-1zM13 1h1v1h-1zM0 2h1v1h-1zM13 2h1v1h-1zM0 3h1v1h-1zM13 3h1v1h-1zM0 4h1v1h-1zM13 4h1v1h-1zM0 5h1v1h-1zM13 5h1v1h-1zM0 6h1v1h-1zM13 6h1v1h-1zM0 7h1v1h-1zM13 7h1v1h-1zM0 8h1v1h-1zM13 8h1v1h-1zM0 9h1v1h-1zM13 9h1v1h-1zM0 10h1v1h-1zM13 10h1v1h-1zM0 11h1v1h-1zM1 11h1v1h-1zM2 11h1v1h-1zM3 11h1v1h-1zM4 11h1v1h-1zM5 11h1v1h-1zM6 11h1v1h-1zM7 11h1v1h-1zM8 11h1v1h-1zM9 11h1v1h-1zM10 11h1v1h-1zM11 11h1v1h-1zM12 11h1v1h-1zM13 11h1v1h-1z" fill="#000"/><path d="M1 1h1v1h-1zM2 1h1v1h-1zM3 1h1v1h-1zM4 1h1v1h-1zM5 1h1v1h-1zM6 1h1v1h-1zM7 1h1v1h-1zM8 1h1v1h-1zM9 1h1v1h-1zM10 1h1v1h-1zM11 1h1v1h-1zM12 1h1v1h-1zM1 2h1v1h-1zM2 2h1v1h-1zM3 2h1v1h-1zM4 2h1v1h-1zM5 2h1v1h-1zM6 2h1v1h-1zM7 2h1v1h-1zM8 2h1v1h-1zM9 2h1v1h-1zM10 2h1v1h-1zM11 2h1v1h-1zM12 2h1v1h-1zM1 3h1v1h-1zM2 3h1v1h-1zM3 3h1v1h-1zM4 3h1v1h-1zM5 3h1v1h-1zM6 3h1v1h-1zM7 3h1v1h-1zM8 3h1v1h-1zM9 3h1v1h-1zM10 3h1v1h-1zM11 3h1v1h-1zM12 3h1v1h-1z" fill="#008000"/><path d="M1 4h1v1h-1zM2 4h1v1h-1zM3 4h1v1h-1zM4 4h1v1h-1zM5 4h1v1h-1zM6 4h1v1h-1zM7 4h1v1h-1zM8 4h1v1h-1zM9 4h1v1h-1zM10 4h1v1h-1zM11 4h1v1h-1zM12 4h1v1h-1zM1 5h1v1h-1zM5 5h1v1h-1zM8 5h1v1h-1zM12 5h1v1h-1zM1 6h1v1h-1zM2 6h1v1h-1zM3 6h1v1h-1zM4 6h1v1h-1zM5 6h1v1h-1zM6 6h1v1h-1zM7 6h1v1h-1zM8 6h1v1h-1zM9 6h1v1h-1zM10 6h1v1h-1zM11 6h1v1h-1zM12 6h1v1h-1zM1 7h1v1h-1zM5 7h1v1h-1zM8 7h1v1h-1zM12 7h1v1h-1zM1 8h1v1h-1zM2 8h1v1h-1zM3 8h1v1h-1zM4 8h1v1h-1zM5 8h1v1h-1zM6 8h1v1h-1zM7 8h1v1h-1zM8 8h1v1h-1zM9 8h1v1h-1zM10 8h1v1h-1zM11 8h1v1h-1zM12 8h1v1h-1zM1 9h1v1h-1zM5 9h1v1h-1zM8 9h1v1h-1zM12 9h1v1h-1zM1 10h1v1h-1zM2 10h1v1h-1zM3 10h1v1h-1zM4 10h1v1h-1zM5 10h1v1h-1zM6 10h1v1h-1zM7 10h1v1h-1zM8 10h1v1h-1zM9 10h1v1h-1zM10 10h1v1h-1zM11 10h1v1h-1zM12 10h1v1h-1z" fill="#fff"/><path d="M2 5h1v1h-1zM3 5h1v1h-1zM4 5h1v1h-1zM6 5h1v1h-1zM7 5h1v1h-1zM9 5h1v1h-1zM10 5h1v1h-1zM11 5h1v1h-1zM2 7h1v1h-1zM3 7h1v1h-1zM4 7h1v1h-1zM6 7h1v1h-1zM7 7h1v1h-1zM9 7h1v1h-1zM10 7h1v1h-1zM11 7h1v1h-1zM2 9h1v1h-1zM3 9h1v1h-1zM4 9h1v1h-1zM6 9h1v1h-1zM7 9h1v1h-1zM9 9h1v1h-1zM10 9h1v1h-1zM11 9h1v1h-1z" fill="#808080"/></svg><div class="t11" style="left:77px;top:289px">C_DayOfMonth</div>
<div class="a" style="left:52px;top:312px;width:6px;height:1px;background:repeating-linear-gradient(90deg,#808080 0 1px,transparent 1px 2px)"></div><div class="a" style="left:42px;top:308px;width:7px;height:7px;border:1px solid #808080;background:#fff"></div><div class="a" style="left:44px;top:312px;width:5px;height:1px;background:#000"></div><div class="a" style="left:46px;top:310px;width:1px;height:5px;background:#000"></div><svg class="a" style="left:58px;top:306px" width="14" height="12" viewBox="0 0 14 12" shape-rendering="crispEdges"><path d="M0 0h1v1h-1zM1 0h1v1h-1zM2 0h1v1h-1zM3 0h1v1h-1zM4 0h1v1h-1zM5 0h1v1h-1zM6 0h1v1h-1zM7 0h1v1h-1zM8 0h1v1h-1zM9 0h1v1h-1zM10 0h1v1h-1zM11 0h1v1h-1zM12 0h1v1h-1zM13 0h1v1h-1zM0 1h1v1h-1zM13 1h1v1h-1zM0 2h1v1h-1zM13 2h1v1h-1zM0 3h1v1h-1zM13 3h1v1h-1zM0 4h1v1h-1zM13 4h1v1h-1zM0 5h1v1h-1zM13 5h1v1h-1zM0 6h1v1h-1zM13 6h1v1h-1zM0 7h1v1h-1zM13 7h1v1h-1zM0 8h1v1h-1zM13 8h1v1h-1zM0 9h1v1h-1zM13 9h1v1h-1zM0 10h1v1h-1zM13 10h1v1h-1zM0 11h1v1h-1zM1 11h1v1h-1zM2 11h1v1h-1zM3 11h1v1h-1zM4 11h1v1h-1zM5 11h1v1h-1zM6 11h1v1h-1zM7 11h1v1h-1zM8 11h1v1h-1zM9 11h1v1h-1zM10 11h1v1h-1zM11 11h1v1h-1zM12 11h1v1h-1zM13 11h1v1h-1z" fill="#000"/><path d="M1 1h1v1h-1zM2 1h1v1h-1zM3 1h1v1h-1zM4 1h1v1h-1zM5 1h1v1h-1zM6 1h1v1h-1zM7 1h1v1h-1zM8 1h1v1h-1zM9 1h1v1h-1zM10 1h1v1h-1zM11 1h1v1h-1zM12 1h1v1h-1zM1 2h1v1h-1zM2 2h1v1h-1zM3 2h1v1h-1zM4 2h1v1h-1zM5 2h1v1h-1zM6 2h1v1h-1zM7 2h1v1h-1zM8 2h1v1h-1zM9 2h1v1h-1zM10 2h1v1h-1zM11 2h1v1h-1zM12 2h1v1h-1zM1 3h1v1h-1zM2 3h1v1h-1zM3 3h1v1h-1zM4 3h1v1h-1zM5 3h1v1h-1zM6 3h1v1h-1zM7 3h1v1h-1zM8 3h1v1h-1zM9 3h1v1h-1zM10 3h1v1h-1zM11 3h1v1h-1zM12 3h1v1h-1z" fill="#008000"/><path d="M1 4h1v1h-1zM2 4h1v1h-1zM3 4h1v1h-1zM4 4h1v1h-1zM5 4h1v1h-1zM6 4h1v1h-1zM7 4h1v1h-1zM8 4h1v1h-1zM9 4h1v1h-1zM10 4h1v1h-1zM11 4h1v1h-1zM12 4h1v1h-1zM1 5h1v1h-1zM5 5h1v1h-1zM8 5h1v1h-1zM12 5h1v1h-1zM1 6h1v1h-1zM2 6h1v1h-1zM3 6h1v1h-1zM4 6h1v1h-1zM5 6h1v1h-1zM6 6h1v1h-1zM7 6h1v1h-1zM8 6h1v1h-1zM9 6h1v1h-1zM10 6h1v1h-1zM11 6h1v1h-1zM12 6h1v1h-1zM1 7h1v1h-1zM5 7h1v1h-1zM8 7h1v1h-1zM12 7h1v1h-1zM1 8h1v1h-1zM2 8h1v1h-1zM3 8h1v1h-1zM4 8h1v1h-1zM5 8h1v1h-1zM6 8h1v1h-1zM7 8h1v1h-1zM8 8h1v1h-1zM9 8h1v1h-1zM10 8h1v1h-1zM11 8h1v1h-1zM12 8h1v1h-1zM1 9h1v1h-1zM5 9h1v1h-1zM8 9h1v1h-1zM12 9h1v1h-1zM1 10h1v1h-1zM2 10h1v1h-1zM3 10h1v1h-1zM4 10h1v1h-1zM5 10h1v1h-1zM6 10h1v1h-1zM7 10h1v1h-1zM8 10h1v1h-1zM9 10h1v1h-1zM10 10h1v1h-1zM11 10h1v1h-1zM12 10h1v1h-1z" fill="#fff"/><path d="M2 5h1v1h-1zM3 5h1v1h-1zM4 5h1v1h-1zM6 5h1v1h-1zM7 5h1v1h-1zM9 5h1v1h-1zM10 5h1v1h-1zM11 5h1v1h-1zM2 7h1v1h-1zM3 7h1v1h-1zM4 7h1v1h-1zM6 7h1v1h-1zM7 7h1v1h-1zM9 7h1v1h-1zM10 7h1v1h-1zM11 7h1v1h-1zM2 9h1v1h-1zM3 9h1v1h-1zM4 9h1v1h-1zM6 9h1v1h-1zM7 9h1v1h-1zM9 9h1v1h-1zM10 9h1v1h-1zM11 9h1v1h-1z" fill="#808080"/></svg><div class="t11" style="left:77px;top:305px">C_Fin_Date_0</div>
<div class="a" style="left:52px;top:328px;width:6px;height:1px;background:repeating-linear-gradient(90deg,#808080 0 1px,transparent 1px 2px)"></div><div class="a" style="left:42px;top:324px;width:7px;height:7px;border:1px solid #808080;background:#fff"></div><div class="a" style="left:44px;top:328px;width:5px;height:1px;background:#000"></div><div class="a" style="left:46px;top:326px;width:1px;height:5px;background:#000"></div><svg class="a" style="left:58px;top:322px" width="14" height="12" viewBox="0 0 14 12" shape-rendering="crispEdges"><path d="M0 0h1v1h-1zM1 0h1v1h-1zM2 0h1v1h-1zM3 0h1v1h-1zM4 0h1v1h-1zM5 0h1v1h-1zM6 0h1v1h-1zM7 0h1v1h-1zM8 0h1v1h-1zM9 0h1v1h-1zM10 0h1v1h-1zM11 0h1v1h-1zM12 0h1v1h-1zM13 0h1v1h-1zM0 1h1v1h-1zM13 1h1v1h-1zM0 2h1v1h-1zM13 2h1v1h-1zM0 3h1v1h-1zM13 3h1v1h-1zM0 4h1v1h-1zM13 4h1v1h-1zM0 5h1v1h-1zM13 5h1v1h-1zM0 6h1v1h-1zM13 6h1v1h-1zM0 7h1v1h-1zM13 7h1v1h-1zM0 8h1v1h-1zM13 8h1v1h-1zM0 9h1v1h-1zM13 9h1v1h-1zM0 10h1v1h-1zM13 10h1v1h-1zM0 11h1v1h-1zM1 11h1v1h-1zM2 11h1v1h-1zM3 11h1v1h-1zM4 11h1v1h-1zM5 11h1v1h-1zM6 11h1v1h-1zM7 11h1v1h-1zM8 11h1v1h-1zM9 11h1v1h-1zM10 11h1v1h-1zM11 11h1v1h-1zM12 11h1v1h-1zM13 11h1v1h-1z" fill="#000"/><path d="M1 1h1v1h-1zM2 1h1v1h-1zM3 1h1v1h-1zM4 1h1v1h-1zM5 1h1v1h-1zM6 1h1v1h-1zM7 1h1v1h-1zM8 1h1v1h-1zM9 1h1v1h-1zM10 1h1v1h-1zM11 1h1v1h-1zM12 1h1v1h-1zM1 2h1v1h-1zM2 2h1v1h-1zM3 2h1v1h-1zM4 2h1v1h-1zM5 2h1v1h-1zM6 2h1v1h-1zM7 2h1v1h-1zM8 2h1v1h-1zM9 2h1v1h-1zM10 2h1v1h-1zM11 2h1v1h-1zM12 2h1v1h-1zM1 3h1v1h-1zM2 3h1v1h-1zM3 3h1v1h-1zM4 3h1v1h-1zM5 3h1v1h-1zM6 3h1v1h-1zM7 3h1v1h-1zM8 3h1v1h-1zM9 3h1v1h-1zM10 3h1v1h-1zM11 3h1v1h-1zM12 3h1v1h-1z" fill="#008000"/><path d="M1 4h1v1h-1zM2 4h1v1h-1zM3 4h1v1h-1zM4 4h1v1h-1zM5 4h1v1h-1zM6 4h1v1h-1zM7 4h1v1h-1zM8 4h1v1h-1zM9 4h1v1h-1zM10 4h1v1h-1zM11 4h1v1h-1zM12 4h1v1h-1zM1 5h1v1h-1zM5 5h1v1h-1zM8 5h1v1h-1zM12 5h1v1h-1zM1 6h1v1h-1zM2 6h1v1h-1zM3 6h1v1h-1zM4 6h1v1h-1zM5 6h1v1h-1zM6 6h1v1h-1zM7 6h1v1h-1zM8 6h1v1h-1zM9 6h1v1h-1zM10 6h1v1h-1zM11 6h1v1h-1zM12 6h1v1h-1zM1 7h1v1h-1zM5 7h1v1h-1zM8 7h1v1h-1zM12 7h1v1h-1zM1 8h1v1h-1zM2 8h1v1h-1zM3 8h1v1h-1zM4 8h1v1h-1zM5 8h1v1h-1zM6 8h1v1h-1zM7 8h1v1h-1zM8 8h1v1h-1zM9 8h1v1h-1zM10 8h1v1h-1zM11 8h1v1h-1zM12 8h1v1h-1zM1 9h1v1h-1zM5 9h1v1h-1zM8 9h1v1h-1zM12 9h1v1h-1zM1 10h1v1h-1zM2 10h1v1h-1zM3 10h1v1h-1zM4 10h1v1h-1zM5 10h1v1h-1zM6 10h1v1h-1zM7 10h1v1h-1zM8 10h1v1h-1zM9 10h1v1h-1zM10 10h1v1h-1zM11 10h1v1h-1zM12 10h1v1h-1z" fill="#fff"/><path d="M2 5h1v1h-1zM3 5h1v1h-1zM4 5h1v1h-1zM6 5h1v1h-1zM7 5h1v1h-1zM9 5h1v1h-1zM10 5h1v1h-1zM11 5h1v1h-1zM2 7h1v1h-1zM3 7h1v1h-1zM4 7h1v1h-1zM6 7h1v1h-1zM7 7h1v1h-1zM9 7h1v1h-1zM10 7h1v1h-1zM11 7h1v1h-1zM2 9h1v1h-1zM3 9h1v1h-1zM4 9h1v1h-1zM6 9h1v1h-1zM7 9h1v1h-1zM9 9h1v1h-1zM10 9h1v1h-1zM11 9h1v1h-1z" fill="#808080"/></svg><div class="t11" style="left:77px;top:321px">C_Fin_Date_1</div>
<div class="a" style="left:52px;top:344px;width:6px;height:1px;background:repeating-linear-gradient(90deg,#808080 0 1px,transparent 1px 2px)"></div><div class="a" style="left:42px;top:340px;width:7px;height:7px;border:1px solid #808080;background:#fff"></div><div class="a" style="left:44px;top:344px;width:5px;height:1px;background:#000"></div><div class="a" style="left:46px;top:342px;width:1px;height:5px;background:#000"></div><svg class="a" style="left:58px;top:338px" width="14" height="12" viewBox="0 0 14 12" shape-rendering="crispEdges"><path d="M0 0h1v1h-1zM1 0h1v1h-1zM2 0h1v1h-1zM3 0h1v1h-1zM4 0h1v1h-1zM5 0h1v1h-1zM6 0h1v1h-1zM7 0h1v1h-1zM8 0h1v1h-1zM9 0h1v1h-1zM10 0h1v1h-1zM11 0h1v1h-1zM12 0h1v1h-1zM13 0h1v1h-1zM0 1h1v1h-1zM13 1h1v1h-1zM0 2h1v1h-1zM13 2h1v1h-1zM0 3h1v1h-1zM13 3h1v1h-1zM0 4h1v1h-1zM13 4h1v1h-1zM0 5h1v1h-1zM13 5h1v1h-1zM0 6h1v1h-1zM13 6h1v1h-1zM0 7h1v1h-1zM13 7h1v1h-1zM0 8h1v1h-1zM13 8h1v1h-1zM0 9h1v1h-1zM13 9h1v1h-1zM0 10h1v1h-1zM13 10h1v1h-1zM0 11h1v1h-1zM1 11h1v1h-1zM2 11h1v1h-1zM3 11h1v1h-1zM4 11h1v1h-1zM5 11h1v1h-1zM6 11h1v1h-1zM7 11h1v1h-1zM8 11h1v1h-1zM9 11h1v1h-1zM10 11h1v1h-1zM11 11h1v1h-1zM12 11h1v1h-1zM13 11h1v1h-1z" fill="#000"/><path d="M1 1h1v1h-1zM2 1h1v1h-1zM3 1h1v1h-1zM4 1h1v1h-1zM5 1h1v1h-1zM6 1h1v1h-1zM7 1h1v1h-1zM8 1h1v1h-1zM9 1h1v1h-1zM10 1h1v1h-1zM11 1h1v1h-1zM12 1h1v1h-1zM1 2h1v1h-1zM2 2h1v1h-1zM3 2h1v1h-1zM4 2h1v1h-1zM5 2h1v1h-1zM6 2h1v1h-1zM7 2h1v1h-1zM8 2h1v1h-1zM9 2h1v1h-1zM10 2h1v1h-1zM11 2h1v1h-1zM12 2h1v1h-1zM1 3h1v1h-1zM2 3h1v1h-1zM3 3h1v1h-1zM4 3h1v1h-1zM5 3h1v1h-1zM6 3h1v1h-1zM7 3h1v1h-1zM8 3h1v1h-1zM9 3h1v1h-1zM10 3h1v1h-1zM11 3h1v1h-1zM12 3h1v1h-1z" fill="#008000"/><path d="M1 4h1v1h-1zM2 4h1v1h-1zM3 4h1v1h-1zM4 4h1v1h-1zM5 4h1v1h-1zM6 4h1v1h-1zM7 4h1v1h-1zM8 4h1v1h-1zM9 4h1v1h-1zM10 4h1v1h-1zM11 4h1v1h-1zM12 4h1v1h-1zM1 5h1v1h-1zM5 5h1v1h-1zM8 5h1v1h-1zM12 5h1v1h-1zM1 6h1v1h-1zM2 6h1v1h-1zM3 6h1v1h-1zM4 6h1v1h-1zM5 6h1v1h-1zM6 6h1v1h-1zM7 6h1v1h-1zM8 6h1v1h-1zM9 6h1v1h-1zM10 6h1v1h-1zM11 6h1v1h-1zM12 6h1v1h-1zM1 7h1v1h-1zM5 7h1v1h-1zM8 7h1v1h-1zM12 7h1v1h-1zM1 8h1v1h-1zM2 8h1v1h-1zM3 8h1v1h-1zM4 8h1v1h-1zM5 8h1v1h-1zM6 8h1v1h-1zM7 8h1v1h-1zM8 8h1v1h-1zM9 8h1v1h-1zM10 8h1v1h-1zM11 8h1v1h-1zM12 8h1v1h-1zM1 9h1v1h-1zM5 9h1v1h-1zM8 9h1v1h-1zM12 9h1v1h-1zM1 10h1v1h-1zM2 10h1v1h-1zM3 10h1v1h-1zM4 10h1v1h-1zM5 10h1v1h-1zM6 10h1v1h-1zM7 10h1v1h-1zM8 10h1v1h-1zM9 10h1v1h-1zM10 10h1v1h-1zM11 10h1v1h-1zM12 10h1v1h-1z" fill="#fff"/><path d="M2 5h1v1h-1zM3 5h1v1h-1zM4 5h1v1h-1zM6 5h1v1h-1zM7 5h1v1h-1zM9 5h1v1h-1zM10 5h1v1h-1zM11 5h1v1h-1zM2 7h1v1h-1zM3 7h1v1h-1zM4 7h1v1h-1zM6 7h1v1h-1zM7 7h1v1h-1zM9 7h1v1h-1zM10 7h1v1h-1zM11 7h1v1h-1zM2 9h1v1h-1zM3 9h1v1h-1zM4 9h1v1h-1zM6 9h1v1h-1zM7 9h1v1h-1zM9 9h1v1h-1zM10 9h1v1h-1zM11 9h1v1h-1z" fill="#808080"/></svg><div class="t11" style="left:77px;top:337px">C_Fin_Date_2</div>
<div class="a" style="left:52px;top:360px;width:6px;height:1px;background:repeating-linear-gradient(90deg,#808080 0 1px,transparent 1px 2px)"></div><div class="a" style="left:42px;top:356px;width:7px;height:7px;border:1px solid #808080;background:#fff"></div><div class="a" style="left:44px;top:360px;width:5px;height:1px;background:#000"></div><div class="a" style="left:46px;top:358px;width:1px;height:5px;background:#000"></div><svg class="a" style="left:58px;top:354px" width="14" height="12" viewBox="0 0 14 12" shape-rendering="crispEdges"><path d="M0 0h1v1h-1zM1 0h1v1h-1zM2 0h1v1h-1zM3 0h1v1h-1zM4 0h1v1h-1zM5 0h1v1h-1zM6 0h1v1h-1zM7 0h1v1h-1zM8 0h1v1h-1zM9 0h1v1h-1zM10 0h1v1h-1zM11 0h1v1h-1zM12 0h1v1h-1zM13 0h1v1h-1zM0 1h1v1h-1zM13 1h1v1h-1zM0 2h1v1h-1zM13 2h1v1h-1zM0 3h1v1h-1zM13 3h1v1h-1zM0 4h1v1h-1zM13 4h1v1h-1zM0 5h1v1h-1zM13 5h1v1h-1zM0 6h1v1h-1zM13 6h1v1h-1zM0 7h1v1h-1zM13 7h1v1h-1zM0 8h1v1h-1zM13 8h1v1h-1zM0 9h1v1h-1zM13 9h1v1h-1zM0 10h1v1h-1zM13 10h1v1h-1zM0 11h1v1h-1zM1 11h1v1h-1zM2 11h1v1h-1zM3 11h1v1h-1zM4 11h1v1h-1zM5 11h1v1h-1zM6 11h1v1h-1zM7 11h1v1h-1zM8 11h1v1h-1zM9 11h1v1h-1zM10 11h1v1h-1zM11 11h1v1h-1zM12 11h1v1h-1zM13 11h1v1h-1z" fill="#000"/><path d="M1 1h1v1h-1zM2 1h1v1h-1zM3 1h1v1h-1zM4 1h1v1h-1zM5 1h1v1h-1zM6 1h1v1h-1zM7 1h1v1h-1zM8 1h1v1h-1zM9 1h1v1h-1zM10 1h1v1h-1zM11 1h1v1h-1zM12 1h1v1h-1zM1 2h1v1h-1zM2 2h1v1h-1zM3 2h1v1h-1zM4 2h1v1h-1zM5 2h1v1h-1zM6 2h1v1h-1zM7 2h1v1h-1zM8 2h1v1h-1zM9 2h1v1h-1zM10 2h1v1h-1zM11 2h1v1h-1zM12 2h1v1h-1zM1 3h1v1h-1zM2 3h1v1h-1zM3 3h1v1h-1zM4 3h1v1h-1zM5 3h1v1h-1zM6 3h1v1h-1zM7 3h1v1h-1zM8 3h1v1h-1zM9 3h1v1h-1zM10 3h1v1h-1zM11 3h1v1h-1zM12 3h1v1h-1z" fill="#008000"/><path d="M1 4h1v1h-1zM2 4h1v1h-1zM3 4h1v1h-1zM4 4h1v1h-1zM5 4h1v1h-1zM6 4h1v1h-1zM7 4h1v1h-1zM8 4h1v1h-1zM9 4h1v1h-1zM10 4h1v1h-1zM11 4h1v1h-1zM12 4h1v1h-1zM1 5h1v1h-1zM5 5h1v1h-1zM8 5h1v1h-1zM12 5h1v1h-1zM1 6h1v1h-1zM2 6h1v1h-1zM3 6h1v1h-1zM4 6h1v1h-1zM5 6h1v1h-1zM6 6h1v1h-1zM7 6h1v1h-1zM8 6h1v1h-1zM9 6h1v1h-1zM10 6h1v1h-1zM11 6h1v1h-1zM12 6h1v1h-1zM1 7h1v1h-1zM5 7h1v1h-1zM8 7h1v1h-1zM12 7h1v1h-1zM1 8h1v1h-1zM2 8h1v1h-1zM3 8h1v1h-1zM4 8h1v1h-1zM5 8h1v1h-1zM6 8h1v1h-1zM7 8h1v1h-1zM8 8h1v1h-1zM9 8h1v1h-1zM10 8h1v1h-1zM11 8h1v1h-1zM12 8h1v1h-1zM1 9h1v1h-1zM5 9h1v1h-1zM8 9h1v1h-1zM12 9h1v1h-1zM1 10h1v1h-1zM2 10h1v1h-1zM3 10h1v1h-1zM4 10h1v1h-1zM5 10h1v1h-1zM6 10h1v1h-1zM7 10h1v1h-1zM8 10h1v1h-1zM9 10h1v1h-1zM10 10h1v1h-1zM11 10h1v1h-1zM12 10h1v1h-1z" fill="#fff"/><path d="M2 5h1v1h-1zM3 5h1v1h-1zM4 5h1v1h-1zM6 5h1v1h-1zM7 5h1v1h-1zM9 5h1v1h-1zM10 5h1v1h-1zM11 5h1v1h-1zM2 7h1v1h-1zM3 7h1v1h-1zM4 7h1v1h-1zM6 7h1v1h-1zM7 7h1v1h-1zM9 7h1v1h-1zM10 7h1v1h-1zM11 7h1v1h-1zM2 9h1v1h-1zM3 9h1v1h-1zM4 9h1v1h-1zM6 9h1v1h-1zM7 9h1v1h-1zM9 9h1v1h-1zM10 9h1v1h-1zM11 9h1v1h-1z" fill="#808080"/></svg><div class="t11" style="left:77px;top:353px">C_Fin_Last_Tran_Date_0</div>
<div class="a" style="left:52px;top:376px;width:6px;height:1px;background:repeating-linear-gradient(90deg,#808080 0 1px,transparent 1px 2px)"></div><div class="a" style="left:42px;top:372px;width:7px;height:7px;border:1px solid #808080;background:#fff"></div><div class="a" style="left:44px;top:376px;width:5px;height:1px;background:#000"></div><div class="a" style="left:46px;top:374px;width:1px;height:5px;background:#000"></div><svg class="a" style="left:58px;top:370px" width="14" height="12" viewBox="0 0 14 12" shape-rendering="crispEdges"><path d="M0 0h1v1h-1zM1 0h1v1h-1zM2 0h1v1h-1zM3 0h1v1h-1zM4 0h1v1h-1zM5 0h1v1h-1zM6 0h1v1h-1zM7 0h1v1h-1zM8 0h1v1h-1zM9 0h1v1h-1zM10 0h1v1h-1zM11 0h1v1h-1zM12 0h1v1h-1zM13 0h1v1h-1zM0 1h1v1h-1zM13 1h1v1h-1zM0 2h1v1h-1zM13 2h1v1h-1zM0 3h1v1h-1zM13 3h1v1h-1zM0 4h1v1h-1zM13 4h1v1h-1zM0 5h1v1h-1zM13 5h1v1h-1zM0 6h1v1h-1zM13 6h1v1h-1zM0 7h1v1h-1zM13 7h1v1h-1zM0 8h1v1h-1zM13 8h1v1h-1zM0 9h1v1h-1zM13 9h1v1h-1zM0 10h1v1h-1zM13 10h1v1h-1zM0 11h1v1h-1zM1 11h1v1h-1zM2 11h1v1h-1zM3 11h1v1h-1zM4 11h1v1h-1zM5 11h1v1h-1zM6 11h1v1h-1zM7 11h1v1h-1zM8 11h1v1h-1zM9 11h1v1h-1zM10 11h1v1h-1zM11 11h1v1h-1zM12 11h1v1h-1zM13 11h1v1h-1z" fill="#000"/><path d="M1 1h1v1h-1zM2 1h1v1h-1zM3 1h1v1h-1zM4 1h1v1h-1zM5 1h1v1h-1zM6 1h1v1h-1zM7 1h1v1h-1zM8 1h1v1h-1zM9 1h1v1h-1zM10 1h1v1h-1zM11 1h1v1h-1zM12 1h1v1h-1zM1 2h1v1h-1zM2 2h1v1h-1zM3 2h1v1h-1zM4 2h1v1h-1zM5 2h1v1h-1zM6 2h1v1h-1zM7 2h1v1h-1zM8 2h1v1h-1zM9 2h1v1h-1zM10 2h1v1h-1zM11 2h1v1h-1zM12 2h1v1h-1zM1 3h1v1h-1zM2 3h1v1h-1zM3 3h1v1h-1zM4 3h1v1h-1zM5 3h1v1h-1zM6 3h1v1h-1zM7 3h1v1h-1zM8 3h1v1h-1zM9 3h1v1h-1zM10 3h1v1h-1zM11 3h1v1h-1zM12 3h1v1h-1z" fill="#008000"/><path d="M1 4h1v1h-1zM2 4h1v1h-1zM3 4h1v1h-1zM4 4h1v1h-1zM5 4h1v1h-1zM6 4h1v1h-1zM7 4h1v1h-1zM8 4h1v1h-1zM9 4h1v1h-1zM10 4h1v1h-1zM11 4h1v1h-1zM12 4h1v1h-1zM1 5h1v1h-1zM5 5h1v1h-1zM8 5h1v1h-1zM12 5h1v1h-1zM1 6h1v1h-1zM2 6h1v1h-1zM3 6h1v1h-1zM4 6h1v1h-1zM5 6h1v1h-1zM6 6h1v1h-1zM7 6h1v1h-1zM8 6h1v1h-1zM9 6h1v1h-1zM10 6h1v1h-1zM11 6h1v1h-1zM12 6h1v1h-1zM1 7h1v1h-1zM5 7h1v1h-1zM8 7h1v1h-1zM12 7h1v1h-1zM1 8h1v1h-1zM2 8h1v1h-1zM3 8h1v1h-1zM4 8h1v1h-1zM5 8h1v1h-1zM6 8h1v1h-1zM7 8h1v1h-1zM8 8h1v1h-1zM9 8h1v1h-1zM10 8h1v1h-1zM11 8h1v1h-1zM12 8h1v1h-1zM1 9h1v1h-1zM5 9h1v1h-1zM8 9h1v1h-1zM12 9h1v1h-1zM1 10h1v1h-1zM2 10h1v1h-1zM3 10h1v1h-1zM4 10h1v1h-1zM5 10h1v1h-1zM6 10h1v1h-1zM7 10h1v1h-1zM8 10h1v1h-1zM9 10h1v1h-1zM10 10h1v1h-1zM11 10h1v1h-1zM12 10h1v1h-1z" fill="#fff"/><path d="M2 5h1v1h-1zM3 5h1v1h-1zM4 5h1v1h-1zM6 5h1v1h-1zM7 5h1v1h-1zM9 5h1v1h-1zM10 5h1v1h-1zM11 5h1v1h-1zM2 7h1v1h-1zM3 7h1v1h-1zM4 7h1v1h-1zM6 7h1v1h-1zM7 7h1v1h-1zM9 7h1v1h-1zM10 7h1v1h-1zM11 7h1v1h-1zM2 9h1v1h-1zM3 9h1v1h-1zM4 9h1v1h-1zM6 9h1v1h-1zM7 9h1v1h-1zM9 9h1v1h-1zM10 9h1v1h-1zM11 9h1v1h-1z" fill="#808080"/></svg><div class="t11" style="left:77px;top:369px">C_Fin_Last_Tran_Date_1</div>
<div class="a" style="left:52px;top:392px;width:6px;height:1px;background:repeating-linear-gradient(90deg,#808080 0 1px,transparent 1px 2px)"></div><div class="a" style="left:42px;top:388px;width:7px;height:7px;border:1px solid #808080;background:#fff"></div><div class="a" style="left:44px;top:392px;width:5px;height:1px;background:#000"></div><div class="a" style="left:46px;top:390px;width:1px;height:5px;background:#000"></div><svg class="a" style="left:58px;top:386px" width="14" height="12" viewBox="0 0 14 12" shape-rendering="crispEdges"><path d="M0 0h1v1h-1zM1 0h1v1h-1zM2 0h1v1h-1zM3 0h1v1h-1zM4 0h1v1h-1zM5 0h1v1h-1zM6 0h1v1h-1zM7 0h1v1h-1zM8 0h1v1h-1zM9 0h1v1h-1zM10 0h1v1h-1zM11 0h1v1h-1zM12 0h1v1h-1zM13 0h1v1h-1zM0 1h1v1h-1zM13 1h1v1h-1zM0 2h1v1h-1zM13 2h1v1h-1zM0 3h1v1h-1zM13 3h1v1h-1zM0 4h1v1h-1zM13 4h1v1h-1zM0 5h1v1h-1zM13 5h1v1h-1zM0 6h1v1h-1zM13 6h1v1h-1zM0 7h1v1h-1zM13 7h1v1h-1zM0 8h1v1h-1zM13 8h1v1h-1zM0 9h1v1h-1zM13 9h1v1h-1zM0 10h1v1h-1zM13 10h1v1h-1zM0 11h1v1h-1zM1 11h1v1h-1zM2 11h1v1h-1zM3 11h1v1h-1zM4 11h1v1h-1zM5 11h1v1h-1zM6 11h1v1h-1zM7 11h1v1h-1zM8 11h1v1h-1zM9 11h1v1h-1zM10 11h1v1h-1zM11 11h1v1h-1zM12 11h1v1h-1zM13 11h1v1h-1z" fill="#000"/><path d="M1 1h1v1h-1zM2 1h1v1h-1zM3 1h1v1h-1zM4 1h1v1h-1zM5 1h1v1h-1zM6 1h1v1h-1zM7 1h1v1h-1zM8 1h1v1h-1zM9 1h1v1h-1zM10 1h1v1h-1zM11 1h1v1h-1zM12 1h1v1h-1zM1 2h1v1h-1zM2 2h1v1h-1zM3 2h1v1h-1zM4 2h1v1h-1zM5 2h1v1h-1zM6 2h1v1h-1zM7 2h1v1h-1zM8 2h1v1h-1zM9 2h1v1h-1zM10 2h1v1h-1zM11 2h1v1h-1zM12 2h1v1h-1zM1 3h1v1h-1zM2 3h1v1h-1zM3 3h1v1h-1zM4 3h1v1h-1zM5 3h1v1h-1zM6 3h1v1h-1zM7 3h1v1h-1zM8 3h1v1h-1zM9 3h1v1h-1zM10 3h1v1h-1zM11 3h1v1h-1zM12 3h1v1h-1z" fill="#008000"/><path d="M1 4h1v1h-1zM2 4h1v1h-1zM3 4h1v1h-1zM4 4h1v1h-1zM5 4h1v1h-1zM6 4h1v1h-1zM7 4h1v1h-1zM8 4h1v1h-1zM9 4h1v1h-1zM10 4h1v1h-1zM11 4h1v1h-1zM12 4h1v1h-1zM1 5h1v1h-1zM5 5h1v1h-1zM8 5h1v1h-1zM12 5h1v1h-1zM1 6h1v1h-1zM2 6h1v1h-1zM3 6h1v1h-1zM4 6h1v1h-1zM5 6h1v1h-1zM6 6h1v1h-1zM7 6h1v1h-1zM8 6h1v1h-1zM9 6h1v1h-1zM10 6h1v1h-1zM11 6h1v1h-1zM12 6h1v1h-1zM1 7h1v1h-1zM5 7h1v1h-1zM8 7h1v1h-1zM12 7h1v1h-1zM1 8h1v1h-1zM2 8h1v1h-1zM3 8h1v1h-1zM4 8h1v1h-1zM5 8h1v1h-1zM6 8h1v1h-1zM7 8h1v1h-1zM8 8h1v1h-1zM9 8h1v1h-1zM10 8h1v1h-1zM11 8h1v1h-1zM12 8h1v1h-1zM1 9h1v1h-1zM5 9h1v1h-1zM8 9h1v1h-1zM12 9h1v1h-1zM1 10h1v1h-1zM2 10h1v1h-1zM3 10h1v1h-1zM4 10h1v1h-1zM5 10h1v1h-1zM6 10h1v1h-1zM7 10h1v1h-1zM8 10h1v1h-1zM9 10h1v1h-1zM10 10h1v1h-1zM11 10h1v1h-1zM12 10h1v1h-1z" fill="#fff"/><path d="M2 5h1v1h-1zM3 5h1v1h-1zM4 5h1v1h-1zM6 5h1v1h-1zM7 5h1v1h-1zM9 5h1v1h-1zM10 5h1v1h-1zM11 5h1v1h-1zM2 7h1v1h-1zM3 7h1v1h-1zM4 7h1v1h-1zM6 7h1v1h-1zM7 7h1v1h-1zM9 7h1v1h-1zM10 7h1v1h-1zM11 7h1v1h-1zM2 9h1v1h-1zM3 9h1v1h-1zM4 9h1v1h-1zM6 9h1v1h-1zM7 9h1v1h-1zM9 9h1v1h-1zM10 9h1v1h-1zM11 9h1v1h-1z" fill="#808080"/></svg><div class="t11" style="left:77px;top:385px">C_Fin_Last_Tran_Date_2</div>
<div class="a" style="left:52px;top:408px;width:6px;height:1px;background:repeating-linear-gradient(90deg,#808080 0 1px,transparent 1px 2px)"></div><div class="a" style="left:42px;top:404px;width:7px;height:7px;border:1px solid #808080;background:#fff"></div><div class="a" style="left:44px;top:408px;width:5px;height:1px;background:#000"></div><div class="a" style="left:46px;top:406px;width:1px;height:5px;background:#000"></div><svg class="a" style="left:58px;top:402px" width="14" height="12" viewBox="0 0 14 12" shape-rendering="crispEdges"><path d="M0 0h1v1h-1zM1 0h1v1h-1zM2 0h1v1h-1zM3 0h1v1h-1zM4 0h1v1h-1zM5 0h1v1h-1zM6 0h1v1h-1zM7 0h1v1h-1zM8 0h1v1h-1zM9 0h1v1h-1zM10 0h1v1h-1zM11 0h1v1h-1zM12 0h1v1h-1zM13 0h1v1h-1zM0 1h1v1h-1zM13 1h1v1h-1zM0 2h1v1h-1zM13 2h1v1h-1zM0 3h1v1h-1zM13 3h1v1h-1zM0 4h1v1h-1zM13 4h1v1h-1zM0 5h1v1h-1zM13 5h1v1h-1zM0 6h1v1h-1zM13 6h1v1h-1zM0 7h1v1h-1zM13 7h1v1h-1zM0 8h1v1h-1zM13 8h1v1h-1zM0 9h1v1h-1zM13 9h1v1h-1zM0 10h1v1h-1zM13 10h1v1h-1zM0 11h1v1h-1zM1 11h1v1h-1zM2 11h1v1h-1zM3 11h1v1h-1zM4 11h1v1h-1zM5 11h1v1h-1zM6 11h1v1h-1zM7 11h1v1h-1zM8 11h1v1h-1zM9 11h1v1h-1zM10 11h1v1h-1zM11 11h1v1h-1zM12 11h1v1h-1zM13 11h1v1h-1z" fill="#000"/><path d="M1 1h1v1h-1zM2 1h1v1h-1zM3 1h1v1h-1zM4 1h1v1h-1zM5 1h1v1h-1zM6 1h1v1h-1zM7 1h1v1h-1zM8 1h1v1h-1zM9 1h1v1h-1zM10 1h1v1h-1zM11 1h1v1h-1zM12 1h1v1h-1zM1 2h1v1h-1zM2 2h1v1h-1zM3 2h1v1h-1zM4 2h1v1h-1zM5 2h1v1h-1zM6 2h1v1h-1zM7 2h1v1h-1zM8 2h1v1h-1zM9 2h1v1h-1zM10 2h1v1h-1zM11 2h1v1h-1zM12 2h1v1h-1zM1 3h1v1h-1zM2 3h1v1h-1zM3 3h1v1h-1zM4 3h1v1h-1zM5 3h1v1h-1zM6 3h1v1h-1zM7 3h1v1h-1zM8 3h1v1h-1zM9 3h1v1h-1zM10 3h1v1h-1zM11 3h1v1h-1zM12 3h1v1h-1z" fill="#008000"/><path d="M1 4h1v1h-1zM2 4h1v1h-1zM3 4h1v1h-1zM4 4h1v1h-1zM5 4h1v1h-1zM6 4h1v1h-1zM7 4h1v1h-1zM8 4h1v1h-1zM9 4h1v1h-1zM10 4h1v1h-1zM11 4h1v1h-1zM12 4h1v1h-1zM1 5h1v1h-1zM5 5h1v1h-1zM8 5h1v1h-1zM12 5h1v1h-1zM1 6h1v1h-1zM2 6h1v1h-1zM3 6h1v1h-1zM4 6h1v1h-1zM5 6h1v1h-1zM6 6h1v1h-1zM7 6h1v1h-1zM8 6h1v1h-1zM9 6h1v1h-1zM10 6h1v1h-1zM11 6h1v1h-1zM12 6h1v1h-1zM1 7h1v1h-1zM5 7h1v1h-1zM8 7h1v1h-1zM12 7h1v1h-1zM1 8h1v1h-1zM2 8h1v1h-1zM3 8h1v1h-1zM4 8h1v1h-1zM5 8h1v1h-1zM6 8h1v1h-1zM7 8h1v1h-1zM8 8h1v1h-1zM9 8h1v1h-1zM10 8h1v1h-1zM11 8h1v1h-1zM12 8h1v1h-1zM1 9h1v1h-1zM5 9h1v1h-1zM8 9h1v1h-1zM12 9h1v1h-1zM1 10h1v1h-1zM2 10h1v1h-1zM3 10h1v1h-1zM4 10h1v1h-1zM5 10h1v1h-1zM6 10h1v1h-1zM7 10h1v1h-1zM8 10h1v1h-1zM9 10h1v1h-1zM10 10h1v1h-1zM11 10h1v1h-1zM12 10h1v1h-1z" fill="#fff"/><path d="M2 5h1v1h-1zM3 5h1v1h-1zM4 5h1v1h-1zM6 5h1v1h-1zM7 5h1v1h-1zM9 5h1v1h-1zM10 5h1v1h-1zM11 5h1v1h-1zM2 7h1v1h-1zM3 7h1v1h-1zM4 7h1v1h-1zM6 7h1v1h-1zM7 7h1v1h-1zM9 7h1v1h-1zM10 7h1v1h-1zM11 7h1v1h-1zM2 9h1v1h-1zM3 9h1v1h-1zM4 9h1v1h-1zM6 9h1v1h-1zM7 9h1v1h-1zM9 9h1v1h-1zM10 9h1v1h-1zM11 9h1v1h-1z" fill="#808080"/></svg><div class="t11" style="left:77px;top:401px">C_Fin_Last_Tran_Year</div>
<div class="a" style="left:52px;top:424px;width:6px;height:1px;background:repeating-linear-gradient(90deg,#808080 0 1px,transparent 1px 2px)"></div><div class="a" style="left:42px;top:420px;width:7px;height:7px;border:1px solid #808080;background:#fff"></div><div class="a" style="left:44px;top:424px;width:5px;height:1px;background:#000"></div><div class="a" style="left:46px;top:422px;width:1px;height:5px;background:#000"></div><svg class="a" style="left:58px;top:418px" width="14" height="12" viewBox="0 0 14 12" shape-rendering="crispEdges"><path d="M0 0h1v1h-1zM1 0h1v1h-1zM2 0h1v1h-1zM3 0h1v1h-1zM4 0h1v1h-1zM5 0h1v1h-1zM6 0h1v1h-1zM7 0h1v1h-1zM8 0h1v1h-1zM9 0h1v1h-1zM10 0h1v1h-1zM11 0h1v1h-1zM12 0h1v1h-1zM13 0h1v1h-1zM0 1h1v1h-1zM13 1h1v1h-1zM0 2h1v1h-1zM13 2h1v1h-1zM0 3h1v1h-1zM13 3h1v1h-1zM0 4h1v1h-1zM13 4h1v1h-1zM0 5h1v1h-1zM13 5h1v1h-1zM0 6h1v1h-1zM13 6h1v1h-1zM0 7h1v1h-1zM13 7h1v1h-1zM0 8h1v1h-1zM13 8h1v1h-1zM0 9h1v1h-1zM13 9h1v1h-1zM0 10h1v1h-1zM13 10h1v1h-1zM0 11h1v1h-1zM1 11h1v1h-1zM2 11h1v1h-1zM3 11h1v1h-1zM4 11h1v1h-1zM5 11h1v1h-1zM6 11h1v1h-1zM7 11h1v1h-1zM8 11h1v1h-1zM9 11h1v1h-1zM10 11h1v1h-1zM11 11h1v1h-1zM12 11h1v1h-1zM13 11h1v1h-1z" fill="#000"/><path d="M1 1h1v1h-1zM2 1h1v1h-1zM3 1h1v1h-1zM4 1h1v1h-1zM5 1h1v1h-1zM6 1h1v1h-1zM7 1h1v1h-1zM8 1h1v1h-1zM9 1h1v1h-1zM10 1h1v1h-1zM11 1h1v1h-1zM12 1h1v1h-1zM1 2h1v1h-1zM2 2h1v1h-1zM3 2h1v1h-1zM4 2h1v1h-1zM5 2h1v1h-1zM6 2h1v1h-1zM7 2h1v1h-1zM8 2h1v1h-1zM9 2h1v1h-1zM10 2h1v1h-1zM11 2h1v1h-1zM12 2h1v1h-1zM1 3h1v1h-1zM2 3h1v1h-1zM3 3h1v1h-1zM4 3h1v1h-1zM5 3h1v1h-1zM6 3h1v1h-1zM7 3h1v1h-1zM8 3h1v1h-1zM9 3h1v1h-1zM10 3h1v1h-1zM11 3h1v1h-1zM12 3h1v1h-1z" fill="#008000"/><path d="M1 4h1v1h-1zM2 4h1v1h-1zM3 4h1v1h-1zM4 4h1v1h-1zM5 4h1v1h-1zM6 4h1v1h-1zM7 4h1v1h-1zM8 4h1v1h-1zM9 4h1v1h-1zM10 4h1v1h-1zM11 4h1v1h-1zM12 4h1v1h-1zM1 5h1v1h-1zM5 5h1v1h-1zM8 5h1v1h-1zM12 5h1v1h-1zM1 6h1v1h-1zM2 6h1v1h-1zM3 6h1v1h-1zM4 6h1v1h-1zM5 6h1v1h-1zM6 6h1v1h-1zM7 6h1v1h-1zM8 6h1v1h-1zM9 6h1v1h-1zM10 6h1v1h-1zM11 6h1v1h-1zM12 6h1v1h-1zM1 7h1v1h-1zM5 7h1v1h-1zM8 7h1v1h-1zM12 7h1v1h-1zM1 8h1v1h-1zM2 8h1v1h-1zM3 8h1v1h-1zM4 8h1v1h-1zM5 8h1v1h-1zM6 8h1v1h-1zM7 8h1v1h-1zM8 8h1v1h-1zM9 8h1v1h-1zM10 8h1v1h-1zM11 8h1v1h-1zM12 8h1v1h-1zM1 9h1v1h-1zM5 9h1v1h-1zM8 9h1v1h-1zM12 9h1v1h-1zM1 10h1v1h-1zM2 10h1v1h-1zM3 10h1v1h-1zM4 10h1v1h-1zM5 10h1v1h-1zM6 10h1v1h-1zM7 10h1v1h-1zM8 10h1v1h-1zM9 10h1v1h-1zM10 10h1v1h-1zM11 10h1v1h-1zM12 10h1v1h-1z" fill="#fff"/><path d="M2 5h1v1h-1zM3 5h1v1h-1zM4 5h1v1h-1zM6 5h1v1h-1zM7 5h1v1h-1zM9 5h1v1h-1zM10 5h1v1h-1zM11 5h1v1h-1zM2 7h1v1h-1zM3 7h1v1h-1zM4 7h1v1h-1zM6 7h1v1h-1zM7 7h1v1h-1zM9 7h1v1h-1zM10 7h1v1h-1zM11 7h1v1h-1zM2 9h1v1h-1zM3 9h1v1h-1zM4 9h1v1h-1zM6 9h1v1h-1zM7 9h1v1h-1zM9 9h1v1h-1zM10 9h1v1h-1zM11 9h1v1h-1z" fill="#808080"/></svg><div class="t11" style="left:77px;top:417px">C_Fin_Year</div>
</div>
<div class="a" style="left:516px;top:137px;width:17px;height:424px;background:linear-gradient(90deg,#e3e3e3 0,#ececec 2px,#f0f0f0 8px,#ececec 15px,#e3e3e3 17px)"></div>
<svg class="a" style="left:521px;top:143px" width="9" height="6" viewBox="0 0 9 6"><path d="M0.5 5.2 L4.5 1 L8.5 5.2Z" fill="#3a3a3a"/></svg>
<svg class="a" style="left:521px;top:549px" width="9" height="6" viewBox="0 0 9 6"><path d="M0.5 0.8 L4.5 5 L8.5 0.8Z" fill="#3a3a3a"/></svg>
<div class="a" style="left:517px;top:155px;width:13px;height:243px;border:1px solid #979797;border-radius:2px;background:linear-gradient(90deg,#f4f4f4 0,#eaeaea 5px,#dadada 6px,#d0d0d0 12px,#c8c8c8 13px)"></div>
<div class="a" style="left:518px;top:156px;width:11px;height:241px;border:1px solid rgba(255,255,255,0.6);border-radius:1px"></div>
<div class="a" style="left:521px;top:273px;width:7px;height:1px;background:#4a4a4a;box-shadow:0 1px 0 #fff"></div>
<div class="a" style="left:521px;top:276px;width:7px;height:1px;background:#4a4a4a;box-shadow:0 1px 0 #fff"></div>
<div class="a" style="left:521px;top:279px;width:7px;height:1px;background:#4a4a4a;box-shadow:0 1px 0 #fff"></div>
<div class="t12" style="left:10px;top:572px;transform:scaleX(0.9);transform-origin:0 0">Ready</div>
<div class="a" style="left:8px;top:586px;width:863px;height:1px;background:#fff"></div>
<svg class="a" style="left:857px;top:573px" width="14" height="14" viewBox="0 0 14 14"><path d="M14 1.5 L2.5 13 M14 5.5 L6.5 13 M14 9.5 L10.5 13" stroke="#fff" stroke-width="1.2"/><path d="M13 1.5 L1.5 13 M13 5.5 L5.5 13 M13 9.5 L9.5 13" stroke="#a0a0a0" stroke-width="1.5"/></svg>
<!-- cursor -->
<svg class="a" style="left:357px;top:162px" width="14" height="21" viewBox="0 0 14 21"><path d="M1 0.8 V16.5 L4.6 13 L7.2 18.6 L9.4 17.6 L6.9 12.2 H11.8 Z" fill="rgba(245,245,245,0.92)" stroke="#1a1a1a" stroke-width="1" stroke-linejoin="miter"/></svg>
</body></html>
